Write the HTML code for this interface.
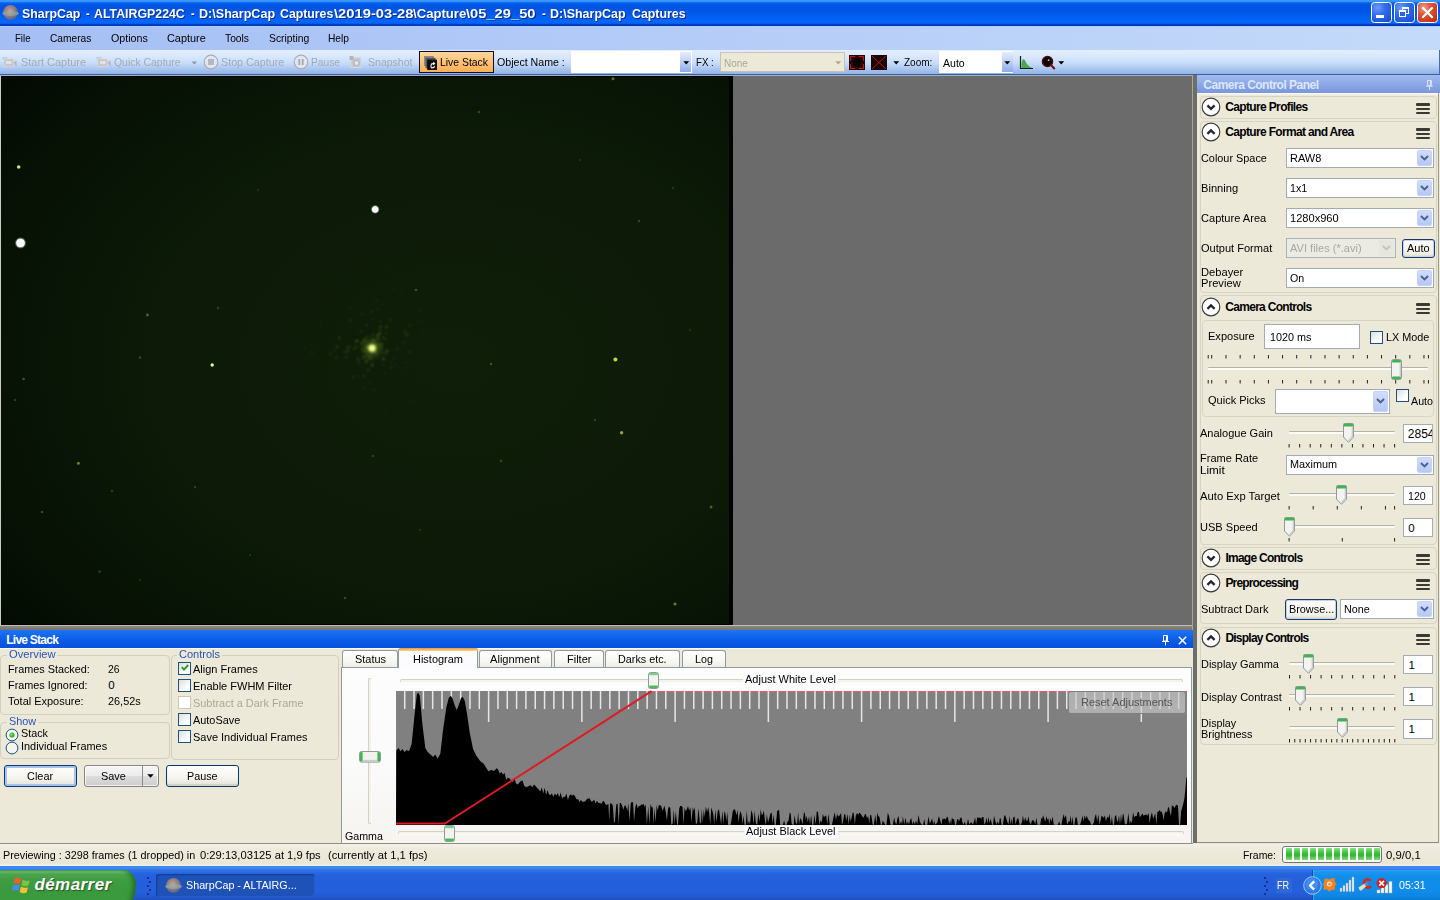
<!DOCTYPE html>
<html><head><meta charset="utf-8"><title>SharpCap</title>
<style>
html,body{margin:0;padding:0;width:1440px;height:900px;overflow:hidden;background:#ece9d8;font-family:"Liberation Sans",sans-serif;font-size:11px;color:#000;}
*{box-sizing:border-box;}
.abs{position:absolute;}
div,span{white-space:pre;}
svg{overflow:visible;}
#title{position:absolute;left:0;top:0;width:1440px;height:26px;background:linear-gradient(#3b97ff 0%,#3791fd 6%,#0a6cf0 10%,#0259e7 16%,#0054e2 30%,#0357e9 50%,#0063f5 72%,#0468fc 84%,#0a5ef4 90%,#0039ba 95%,#0035b4 100%);}
#menu{position:absolute;left:0;top:26px;width:1440px;height:25px;background:linear-gradient(90deg,#a5bff5,#c4dafa);border-top:1px solid #a9d0fb;}
#tool{position:absolute;left:0;top:50px;width:1440px;height:25px;border-right:1px solid #4a6aa8;background:linear-gradient(#e3efff 0%,#d9e8fd 25%,#cbe1fa 45%,#c3d9f8 56%,#a9c6f0 76%,#93b2e5 96%,#93b2e5 96%,#3b619c 96%,#3b619c 100%);}
#main{position:absolute;left:0;top:75px;width:1193px;height:552px;background:#6b6b6b;border-top:1px solid #9fb0cb;}
</style></head>
<body>
<div id="title"></div>
<div class="abs" style="left:3px;top:5px;width:15px;height:15px;border-radius:50%;background:radial-gradient(circle at 45% 40%,#c9a58f 0%,#8b7a86 45%,#4a5a8c 80%,#2a3f7a 100%);"></div>
<div class="abs" style="left:2px;top:11px;width:17px;height:5px;border-radius:50%;background:rgba(150,180,170,.55);"></div>
<span class="abs" style="left:21.70px;top:6.57px;font-size:13.5px;line-height:1;color:#fff;font-weight:bold;transform:scaleX(0.9143);transform-origin:0 0;text-shadow:1px 1px 0 #0a2c8a;">SharpCap</span>
<span class="abs" style="left:85.80px;top:6.57px;font-size:13.5px;line-height:1;color:#fff;font-weight:bold;transform:scaleX(0.8000);transform-origin:0 0;text-shadow:1px 1px 0 #0a2c8a;">-</span>
<span class="abs" style="left:94.20px;top:6.57px;font-size:13.5px;line-height:1;color:#fff;font-weight:bold;transform:scaleX(0.9146);transform-origin:0 0;text-shadow:1px 1px 0 #0a2c8a;">ALTAIRGP224C</span>
<span class="abs" style="left:191.40px;top:6.57px;font-size:13.5px;line-height:1;color:#fff;font-weight:bold;transform:scaleX(0.8000);transform-origin:0 0;text-shadow:1px 1px 0 #0a2c8a;">-</span>
<span class="abs" style="left:198.70px;top:6.57px;font-size:13.5px;line-height:1;color:#fff;font-weight:bold;transform:scaleX(0.9307);transform-origin:0 0;text-shadow:1px 1px 0 #0a2c8a;">D:\SharpCap</span>
<span class="abs" style="left:280.20px;top:6.57px;font-size:13.5px;line-height:1;color:#fff;font-weight:bold;transform:scaleX(0.9109);transform-origin:0 0;text-shadow:1px 1px 0 #0a2c8a;">Captures</span>
<span class="abs" style="left:333.50px;top:6.57px;font-size:13.5px;line-height:1;color:#fff;font-weight:bold;transform:scaleX(1.0918);transform-origin:0 0;text-shadow:1px 1px 0 #0a2c8a;">\2019-03-28</span>
<span class="abs" style="left:413.00px;top:6.57px;font-size:13.5px;line-height:1;color:#fff;font-weight:bold;transform:scaleX(0.9732);transform-origin:0 0;text-shadow:1px 1px 0 #0a2c8a;">\Capture</span>
<span class="abs" style="left:466.30px;top:6.57px;font-size:13.5px;line-height:1;color:#fff;font-weight:bold;transform:scaleX(1.0889);transform-origin:0 0;text-shadow:1px 1px 0 #0a2c8a;">\05_29_50</span>
<span class="abs" style="left:542.00px;top:6.57px;font-size:13.5px;line-height:1;color:#fff;font-weight:bold;transform:scaleX(0.8444);transform-origin:0 0;text-shadow:1px 1px 0 #0a2c8a;">-</span>
<span class="abs" style="left:550.40px;top:6.57px;font-size:13.5px;line-height:1;color:#fff;font-weight:bold;transform:scaleX(0.9246);transform-origin:0 0;text-shadow:1px 1px 0 #0a2c8a;">D:\SharpCap</span>
<span class="abs" style="left:631.70px;top:6.57px;font-size:13.5px;line-height:1;color:#fff;font-weight:bold;transform:scaleX(0.9160);transform-origin:0 0;text-shadow:1px 1px 0 #0a2c8a;">Captures</span>
<div class="abs" style="left:1371px;top:2px;width:21px;height:21px;border:1px solid #fff;border-radius:3.5px;background:radial-gradient(circle at 30% 25%,#6f9cf7 0%,#2f6ceb 40%,#1f55d8 80%,#1846bf 100%);"></div>
<div class="abs" style="left:1394px;top:2px;width:21px;height:21px;border:1px solid #fff;border-radius:3.5px;background:radial-gradient(circle at 30% 25%,#6f9cf7 0%,#2f6ceb 40%,#1f55d8 80%,#1846bf 100%);"></div>
<div class="abs" style="left:1417px;top:2px;width:21px;height:21px;border:1px solid #fff;border-radius:3.5px;background:radial-gradient(circle at 30% 25%,#f0a088 0%,#e0553a 35%,#c83a1c 75%,#b02c10 100%);"></div>
<div class="abs" style="left:1376px;top:15px;width:7.5px;height:3px;background:#fff;"></div>
<div class="abs" style="left:1401.5px;top:7px;width:7.5px;height:7px;border:1px solid #fff;border-top-width:2px;"></div>
<div class="abs" style="left:1399px;top:10px;width:7px;height:7px;border:1px solid #fff;border-top-width:2px;background:#2a62e0;"></div>
<svg class="abs" style="left:1421px;top:6px" width="13" height="13" viewBox="0 0 13 13"><path d="M2 2 L11 11 M11 2 L2 11" stroke="#fff" stroke-width="2.2" stroke-linecap="round"/></svg>
<div id="menu"></div>
<span class="abs" style="left:14.50px;top:33.09px;font-size:11px;line-height:1;color:#000;transform:scaleX(0.8740);transform-origin:0 0;">File</span>
<span class="abs" style="left:49.70px;top:33.09px;font-size:11px;line-height:1;color:#000;transform:scaleX(0.9255);transform-origin:0 0;">Cameras</span>
<span class="abs" style="left:110.70px;top:33.09px;font-size:11px;line-height:1;color:#000;transform:scaleX(0.9704);transform-origin:0 0;">Options</span>
<span class="abs" style="left:166.70px;top:33.09px;font-size:11px;line-height:1;color:#000;transform:scaleX(0.9913);transform-origin:0 0;">Capture</span>
<span class="abs" style="left:225.00px;top:33.09px;font-size:11px;line-height:1;color:#000;transform:scaleX(0.9343);transform-origin:0 0;">Tools</span>
<span class="abs" style="left:268.70px;top:33.09px;font-size:11px;line-height:1;color:#000;transform:scaleX(0.9417);transform-origin:0 0;">Scripting</span>
<span class="abs" style="left:328.00px;top:33.09px;font-size:11px;line-height:1;color:#000;transform:scaleX(0.9282);transform-origin:0 0;">Help</span>
<div id="tool"></div>
<svg class="abs" style="left:2px;top:56px" width="16" height="12" viewBox="0 0 16 12"><rect x="0.5" y="1" width="5" height="3" fill="#cccdd1"/><rect x="2" y="3" width="9.5" height="7.4" fill="#c4c6ca" stroke="#dcdde1" stroke-width="0.6"/><path d="M11.5 6.7 L14.6 4 V10.4 Z" fill="#b4b7bd"/><rect x="4" y="5" width="5.5" height="3.2" fill="#e2e3e6"/></svg>
<svg class="abs" style="left:95.5px;top:56px" width="16" height="12" viewBox="0 0 16 12"><rect x="0.5" y="1" width="5" height="3" fill="#cccdd1"/><rect x="2" y="3" width="9.5" height="7.4" fill="#c4c6ca" stroke="#dcdde1" stroke-width="0.6"/><path d="M11.5 6.7 L14.6 4 V10.4 Z" fill="#b4b7bd"/><rect x="4" y="5" width="5.5" height="3.2" fill="#e2e3e6"/></svg>
<span class="abs" style="left:20.80px;top:57.29px;font-size:11px;line-height:1;color:#a4a9b4;transform:scaleX(0.9936);transform-origin:0 0;">Start Capture</span>
<span class="abs" style="left:114.20px;top:57.29px;font-size:11px;line-height:1;color:#a4a9b4;transform:scaleX(0.9472);transform-origin:0 0;">Quick Capture</span>
<svg class="abs" style="left:191px;top:61px" width="7" height="4"><path d="M0.5 0.5 H6 L3.25 3.4 Z" fill="#8d97ad"/></svg>
<svg class="abs" style="left:202.5px;top:53.8px" width="16" height="16" viewBox="0 0 16 16"><circle cx="8" cy="8" r="6.8" fill="#e2e6ee" stroke="#a9adb8" stroke-width="1.2"/><rect x="5" y="5" width="6" height="6" fill="#b4b7c0"/></svg>
<span class="abs" style="left:220.80px;top:57.29px;font-size:11px;line-height:1;color:#a4a9b4;transform:scaleX(0.9749);transform-origin:0 0;">Stop Capture</span>
<svg class="abs" style="left:292.7px;top:53.8px" width="16" height="16" viewBox="0 0 16 16"><circle cx="8" cy="8" r="6.8" fill="#e2e6ee" stroke="#a9adb8" stroke-width="1.2"/><rect x="5.4" y="5" width="1.8" height="6" fill="#a4a8b2"/><rect x="8.8" y="5" width="1.8" height="6" fill="#a4a8b2"/></svg>
<span class="abs" style="left:311.00px;top:57.29px;font-size:11px;line-height:1;color:#a4a9b4;transform:scaleX(0.9294);transform-origin:0 0;">Pause</span>
<svg class="abs" style="left:349px;top:55px" width="14" height="14" viewBox="0 0 14 14"><rect x="2" y="2.5" width="10" height="10" fill="#c6c8cd" stroke="#dcdde0" stroke-width=".8"/><rect x="0.5" y="1" width="4" height="4" fill="#b2b5bb"/><circle cx="7.5" cy="8" r="2.5" fill="#e6e7ea" stroke="#a2a6ae" stroke-width=".8"/></svg>
<span class="abs" style="left:367.50px;top:57.29px;font-size:11px;line-height:1;color:#a4a9b4;transform:scaleX(0.9573);transform-origin:0 0;">Snapshot</span>
<div class="abs" style="left:419px;top:51px;width:75px;height:22px;border:1px solid #0b0b3c;background:linear-gradient(#ffd69e 0%,#ffc57c 45%,#ffae54 100%);"></div>
<svg class="abs" style="left:424px;top:56px" width="13" height="14" viewBox="0 0 13 14"><rect x="0" y="0" width="10" height="10" fill="#8a8a86"/><rect x="1.5" y="1.8" width="10" height="10.4" fill="#55555a"/><rect x="3.2" y="3.6" width="9.8" height="10.4" fill="#0c0c10"/><path d="M7 11.6 V9.4 Q7 7.6 9 7.6 H10.2 M9.2 6.4 L10.6 7.6 L9.2 8.8 M7 11.6 Q9.6 12.4 10.8 10.4" stroke="#f4f4f4" stroke-width="1.1" fill="none"/></svg>
<span class="abs" style="left:439.50px;top:57.29px;font-size:11px;line-height:1;color:#000;transform:scaleX(0.9458);transform-origin:0 0;">Live Stack</span>
<span class="abs" style="left:496.70px;top:57.29px;font-size:11px;line-height:1;color:#000;transform:scaleX(0.9643);transform-origin:0 0;">Object Name :</span>
<div class="abs" style="left:571px;top:51px;width:121px;height:22px;background:#fff;"></div>
<div class="abs" style="left:680px;top:52px;width:11px;height:20px;background:linear-gradient(#e4edfc,#bcd0f5 50%,#8dabe6);"></div>
<svg class="abs" style="left:682.5px;top:61px" width="7" height="4"><path d="M0.3 0.3 H6.2 L3.25 3.6 Z" fill="#000"/></svg>
<span class="abs" style="left:696.00px;top:57.29px;font-size:11px;line-height:1;color:#000;transform:scaleX(0.8824);transform-origin:0 0;">FX :</span>
<div class="abs" style="left:720px;top:52px;width:125px;height:20px;background:#ece9d8;border:1px solid #c5c2b4;"></div>
<span class="abs" style="left:724.00px;top:57.69px;font-size:11px;line-height:1;color:#a7a699;transform:scaleX(0.9012);transform-origin:0 0;">None</span>
<svg class="abs" style="left:835px;top:61px" width="7" height="4"><path d="M0.3 0.3 H6.2 L3.25 3.6 Z" fill="#a8a79c"/></svg>
<svg class="abs" style="left:849px;top:54.6px" width="16" height="15" viewBox="0 0 16 15"><rect x="0" y="0" width="16" height="15" fill="#240707"/><rect x="1.6" y="1.6" width="12.8" height="11.8" fill="none" stroke="#d61a1a" stroke-width="1"/><circle cx="8" cy="7.5" r="4.2" fill="#000"/><path d="M6.2 1.6 H9.8 M6.2 13.4 H9.8 M1.6 5.8 V9.2 M14.4 5.8 V9.2" stroke="#240707" stroke-width="1.2"/></svg>
<svg class="abs" style="left:871px;top:54.6px" width="16" height="15" viewBox="0 0 16 15"><rect x="0" y="0" width="16" height="15" fill="#1c0505"/><path d="M1 1 L15 14 M15 1 L1 14" stroke="#c41414" stroke-width="0.9"/></svg>
<svg class="abs" style="left:892.5px;top:61px" width="7" height="4"><path d="M0.3 0.3 H6.2 L3.25 3.6 Z" fill="#000"/></svg>
<span class="abs" style="left:904.00px;top:57.29px;font-size:11px;line-height:1;color:#000;transform:scaleX(0.9106);transform-origin:0 0;">Zoom:</span>
<div class="abs" style="left:939px;top:51px;width:74px;height:22px;background:#fff;"></div>
<div class="abs" style="left:1001.5px;top:52px;width:11px;height:20px;background:linear-gradient(#e4edfc,#bcd0f5 50%,#8dabe6);"></div>
<svg class="abs" style="left:1004px;top:61px" width="7" height="4"><path d="M0.3 0.3 H6.2 L3.25 3.6 Z" fill="#000"/></svg>
<span class="abs" style="left:943.30px;top:57.69px;font-size:11px;line-height:1;color:#000;transform:scaleX(0.9585);transform-origin:0 0;">Auto</span>
<svg class="abs" style="left:1018.5px;top:54.5px" width="15" height="15" viewBox="0 0 15 15"><path d="M1.5 1 V13.5 H14" stroke="#1a1a1a" stroke-width="1.2" fill="none"/><path d="M2.5 13 V8 Q4.2 1.5 6 5.5 Q7.5 9 9.5 10.8 Q11 12.4 13 13 Z" fill="#4aa84a"/></svg>
<svg class="abs" style="left:1040.5px;top:54.5px" width="15" height="15" viewBox="0 0 15 15"><circle cx="6.5" cy="6.5" r="5" fill="#0a0606" stroke="#4a0c0c" stroke-width="1.6"/><circle cx="7.6" cy="5.2" r="0.9" fill="#cfc8c8"/><path d="M10.2 10.2 L13.2 13.4" stroke="#7a1010" stroke-width="2.2" stroke-linecap="round"/></svg>
<svg class="abs" style="left:1057.5px;top:61px" width="7" height="4"><path d="M0.3 0.3 H6.2 L3.25 3.6 Z" fill="#000"/></svg>
<div id="main"></div>
<svg class="abs" style="left:1px;top:76px" width="732" height="549" viewBox="1 76 732 549"><defs><radialGradient id="bgv" cx="62%" cy="52%" r="80%"><stop offset="0" stop-color="#0f1e09"/><stop offset=".5" stop-color="#0c1a07"/><stop offset=".8" stop-color="#071205"/><stop offset="1" stop-color="#030a02"/></radialGradient><radialGradient id="glow" cx="50%" cy="50%" r="50%"><stop offset="0" stop-color="#e8ff70" stop-opacity="1"/><stop offset=".18" stop-color="#c8e84a" stop-opacity=".9"/><stop offset=".4" stop-color="#6a8a22" stop-opacity=".5"/><stop offset="1" stop-color="#2a4010" stop-opacity="0"/></radialGradient><radialGradient id="st" cx="50%" cy="50%" r="50%"><stop offset="0" stop-color="#ffffff"/><stop offset=".6" stop-color="#f4ffe8"/><stop offset="1" stop-color="#7a9a50" stop-opacity="0"/></radialGradient><filter id="bl" x="-20%" y="-20%" width="140%" height="140%"><feGaussianBlur stdDeviation="0.8"/></filter></defs><rect x="1" y="76" width="732" height="549" fill="url(#bgv)"/><rect x="729" y="76" width="4" height="549" fill="#010301"/><rect x="1" y="76" width="732" height="1" fill="#010201"/><rect x="1" y="624" width="732" height="1" fill="#010201"/><g filter="url(#bl)"><circle cx="365.0" cy="338.8" r="1.2" fill="#7a9a2a" opacity="0.20"/><circle cx="358.6" cy="362.7" r="1.2" fill="#7a9a2a" opacity="0.17"/><circle cx="405.8" cy="363.2" r="1.1" fill="#7a9a2a" opacity="0.12"/><circle cx="377.7" cy="338.1" r="1.0" fill="#7a9a2a" opacity="0.21"/><circle cx="320.7" cy="322.5" r="1.5" fill="#7a9a2a" opacity="0.07"/><circle cx="429.4" cy="364.6" r="1.0" fill="#7a9a2a" opacity="0.09"/><circle cx="367.1" cy="360.5" r="0.9" fill="#7a9a2a" opacity="0.36"/><circle cx="357.6" cy="340.5" r="1.1" fill="#7a9a2a" opacity="0.31"/><circle cx="386.1" cy="353.4" r="1.3" fill="#7a9a2a" opacity="0.22"/><circle cx="365.4" cy="351.3" r="1.2" fill="#7a9a2a" opacity="0.28"/><circle cx="380.3" cy="320.9" r="1.0" fill="#7a9a2a" opacity="0.24"/><circle cx="361.5" cy="343.1" r="1.4" fill="#7a9a2a" opacity="0.31"/><circle cx="379.4" cy="347.3" r="1.1" fill="#7a9a2a" opacity="0.23"/><circle cx="373.5" cy="319.6" r="1.1" fill="#7a9a2a" opacity="0.15"/><circle cx="376.7" cy="300.8" r="1.4" fill="#7a9a2a" opacity="0.11"/><circle cx="366.0" cy="361.8" r="1.2" fill="#7a9a2a" opacity="0.32"/><circle cx="390.8" cy="320.2" r="1.1" fill="#7a9a2a" opacity="0.24"/><circle cx="361.3" cy="331.1" r="1.3" fill="#7a9a2a" opacity="0.17"/><circle cx="400.4" cy="292.8" r="1.1" fill="#7a9a2a" opacity="0.06"/><circle cx="330.7" cy="278.1" r="1.1" fill="#7a9a2a" opacity="0.05"/><circle cx="383.2" cy="352.3" r="0.9" fill="#7a9a2a" opacity="0.36"/><circle cx="372.4" cy="365.2" r="1.4" fill="#7a9a2a" opacity="0.25"/><circle cx="339.2" cy="338.2" r="1.4" fill="#7a9a2a" opacity="0.24"/><circle cx="385.9" cy="333.2" r="1.1" fill="#7a9a2a" opacity="0.21"/><circle cx="416.4" cy="336.7" r="0.9" fill="#7a9a2a" opacity="0.09"/><circle cx="378.4" cy="400.6" r="1.1" fill="#7a9a2a" opacity="0.06"/><circle cx="397.3" cy="348.8" r="1.1" fill="#7a9a2a" opacity="0.22"/><circle cx="356.3" cy="341.6" r="1.3" fill="#7a9a2a" opacity="0.37"/><circle cx="350.6" cy="307.3" r="1.4" fill="#7a9a2a" opacity="0.07"/><circle cx="373.7" cy="340.4" r="1.4" fill="#7a9a2a" opacity="0.41"/><circle cx="395.3" cy="365.0" r="0.8" fill="#7a9a2a" opacity="0.23"/><circle cx="394.2" cy="357.6" r="0.9" fill="#7a9a2a" opacity="0.18"/><circle cx="381.7" cy="348.2" r="0.9" fill="#7a9a2a" opacity="0.23"/><circle cx="363.7" cy="357.4" r="1.4" fill="#7a9a2a" opacity="0.19"/><circle cx="371.8" cy="365.0" r="1.1" fill="#7a9a2a" opacity="0.24"/><circle cx="383.5" cy="358.7" r="1.5" fill="#7a9a2a" opacity="0.35"/><circle cx="406.4" cy="367.7" r="1.0" fill="#7a9a2a" opacity="0.11"/><circle cx="371.0" cy="359.4" r="0.9" fill="#7a9a2a" opacity="0.38"/><circle cx="291.6" cy="334.5" r="1.2" fill="#7a9a2a" opacity="0.05"/><circle cx="387.2" cy="350.7" r="1.5" fill="#7a9a2a" opacity="0.29"/><circle cx="369.6" cy="382.6" r="0.9" fill="#7a9a2a" opacity="0.16"/><circle cx="377.8" cy="309.2" r="1.3" fill="#7a9a2a" opacity="0.15"/><circle cx="377.7" cy="335.1" r="1.4" fill="#7a9a2a" opacity="0.39"/><circle cx="380.4" cy="326.8" r="1.3" fill="#7a9a2a" opacity="0.30"/><circle cx="366.2" cy="355.4" r="0.8" fill="#7a9a2a" opacity="0.20"/><circle cx="364.3" cy="387.6" r="1.3" fill="#7a9a2a" opacity="0.12"/><circle cx="406.7" cy="334.4" r="1.5" fill="#7a9a2a" opacity="0.23"/><circle cx="363.3" cy="357.8" r="1.0" fill="#7a9a2a" opacity="0.23"/><circle cx="364.2" cy="340.8" r="1.4" fill="#7a9a2a" opacity="0.40"/><circle cx="347.9" cy="351.2" r="1.4" fill="#7a9a2a" opacity="0.26"/><circle cx="409.7" cy="325.5" r="1.3" fill="#7a9a2a" opacity="0.16"/><circle cx="344.5" cy="351.8" r="1.4" fill="#7a9a2a" opacity="0.16"/><circle cx="404.1" cy="342.7" r="1.1" fill="#7a9a2a" opacity="0.18"/><circle cx="423.0" cy="331.4" r="0.9" fill="#7a9a2a" opacity="0.10"/><circle cx="386.0" cy="339.2" r="0.9" fill="#7a9a2a" opacity="0.34"/><circle cx="380.0" cy="333.8" r="1.3" fill="#7a9a2a" opacity="0.37"/><circle cx="391.0" cy="367.6" r="1.5" fill="#7a9a2a" opacity="0.14"/><circle cx="350.5" cy="320.1" r="1.5" fill="#7a9a2a" opacity="0.18"/><circle cx="401.3" cy="294.8" r="1.0" fill="#7a9a2a" opacity="0.06"/><circle cx="364.0" cy="375.9" r="1.2" fill="#7a9a2a" opacity="0.17"/><circle cx="376.2" cy="352.4" r="1.0" fill="#7a9a2a" opacity="0.43"/><circle cx="336.1" cy="357.4" r="1.4" fill="#7a9a2a" opacity="0.18"/><circle cx="305.3" cy="347.5" r="1.2" fill="#7a9a2a" opacity="0.07"/><circle cx="410.0" cy="352.5" r="0.9" fill="#7a9a2a" opacity="0.16"/><circle cx="400.8" cy="399.7" r="1.3" fill="#7a9a2a" opacity="0.07"/><circle cx="367.0" cy="346.4" r="1.2" fill="#7a9a2a" opacity="0.29"/><circle cx="416.6" cy="381.5" r="1.0" fill="#7a9a2a" opacity="0.08"/><circle cx="368.2" cy="369.9" r="1.2" fill="#7a9a2a" opacity="0.29"/><circle cx="418.2" cy="321.4" r="1.2" fill="#7a9a2a" opacity="0.08"/><circle cx="347.7" cy="347.4" r="1.3" fill="#7a9a2a" opacity="0.24"/><circle cx="330.7" cy="353.7" r="1.3" fill="#7a9a2a" opacity="0.20"/><circle cx="383.3" cy="337.8" r="1.0" fill="#7a9a2a" opacity="0.38"/><circle cx="412.5" cy="287.8" r="0.9" fill="#7a9a2a" opacity="0.05"/><circle cx="342.2" cy="359.0" r="1.0" fill="#7a9a2a" opacity="0.13"/><circle cx="382.0" cy="304.9" r="0.9" fill="#7a9a2a" opacity="0.16"/><circle cx="366.8" cy="324.9" r="0.9" fill="#7a9a2a" opacity="0.26"/><circle cx="384.7" cy="409.8" r="1.1" fill="#7a9a2a" opacity="0.10"/><circle cx="312.0" cy="352.8" r="1.4" fill="#7a9a2a" opacity="0.10"/><circle cx="350.2" cy="346.2" r="0.9" fill="#7a9a2a" opacity="0.22"/><circle cx="358.4" cy="376.6" r="0.8" fill="#7a9a2a" opacity="0.22"/><circle cx="408.4" cy="352.1" r="1.2" fill="#7a9a2a" opacity="0.15"/><circle cx="356.7" cy="347.1" r="1.5" fill="#7a9a2a" opacity="0.19"/><circle cx="391.4" cy="362.4" r="0.8" fill="#7a9a2a" opacity="0.19"/><circle cx="387.9" cy="266.9" r="0.9" fill="#7a9a2a" opacity="0.06"/><circle cx="399.9" cy="291.1" r="0.9" fill="#7a9a2a" opacity="0.06"/><circle cx="404.5" cy="331.1" r="1.3" fill="#7a9a2a" opacity="0.18"/><circle cx="367.1" cy="336.5" r="0.9" fill="#7a9a2a" opacity="0.28"/><circle cx="381.2" cy="344.7" r="1.4" fill="#7a9a2a" opacity="0.34"/><circle cx="425.5" cy="370.8" r="1.1" fill="#7a9a2a" opacity="0.09"/><circle cx="353.2" cy="376.9" r="1.4" fill="#7a9a2a" opacity="0.19"/><circle cx="366.3" cy="347.3" r="0.9" fill="#7a9a2a" opacity="0.27"/><circle cx="383.0" cy="364.9" r="0.9" fill="#7a9a2a" opacity="0.17"/><circle cx="373.0" cy="334.6" r="1.2" fill="#7a9a2a" opacity="0.24"/><circle cx="384.9" cy="373.2" r="0.8" fill="#7a9a2a" opacity="0.19"/><circle cx="371.7" cy="344.4" r="0.9" fill="#7a9a2a" opacity="0.35"/><circle cx="362.6" cy="349.6" r="0.9" fill="#7a9a2a" opacity="0.42"/><circle cx="353.8" cy="348.7" r="1.1" fill="#7a9a2a" opacity="0.34"/><circle cx="337.2" cy="346.8" r="1.5" fill="#7a9a2a" opacity="0.21"/><circle cx="362.1" cy="314.1" r="1.1" fill="#7a9a2a" opacity="0.19"/><circle cx="340.7" cy="390.5" r="0.9" fill="#7a9a2a" opacity="0.05"/><circle cx="370.3" cy="397.1" r="0.9" fill="#7a9a2a" opacity="0.07"/><circle cx="386.5" cy="327.0" r="1.3" fill="#7a9a2a" opacity="0.29"/><circle cx="369.8" cy="356.2" r="0.9" fill="#7a9a2a" opacity="0.31"/><circle cx="346.3" cy="356.9" r="1.5" fill="#7a9a2a" opacity="0.18"/><circle cx="373.6" cy="389.7" r="1.0" fill="#7a9a2a" opacity="0.18"/><circle cx="365.3" cy="356.3" r="1.1" fill="#7a9a2a" opacity="0.19"/><circle cx="384.6" cy="385.6" r="0.8" fill="#7a9a2a" opacity="0.15"/><circle cx="371.2" cy="357.7" r="1.1" fill="#7a9a2a" opacity="0.21"/><circle cx="368.6" cy="357.7" r="1.2" fill="#7a9a2a" opacity="0.25"/><circle cx="366.4" cy="347.2" r="1.3" fill="#7a9a2a" opacity="0.40"/><circle cx="358.3" cy="359.1" r="1.5" fill="#7a9a2a" opacity="0.23"/><circle cx="412.4" cy="400.6" r="1.3" fill="#7a9a2a" opacity="0.08"/><circle cx="420.7" cy="310.9" r="1.3" fill="#7a9a2a" opacity="0.08"/><circle cx="379.9" cy="330.2" r="1.2" fill="#7a9a2a" opacity="0.19"/><circle cx="393.9" cy="290.3" r="1.2" fill="#7a9a2a" opacity="0.09"/><circle cx="376.5" cy="344.8" r="1.3" fill="#7a9a2a" opacity="0.38"/><circle cx="375.5" cy="351.7" r="0.9" fill="#7a9a2a" opacity="0.30"/><circle cx="378.3" cy="338.4" r="1.2" fill="#7a9a2a" opacity="0.31"/><circle cx="334.3" cy="350.6" r="1.4" fill="#7a9a2a" opacity="0.10"/><circle cx="371.7" cy="311.7" r="1.2" fill="#7a9a2a" opacity="0.16"/><circle cx="372.1" cy="348.2" r="14" fill="url(#glow)" opacity=".8"/><circle cx="372.1" cy="348.2" r="3.4" fill="#eeff8a"/></g><circle cx="20.5" cy="243" r="6" fill="url(#st)"/><circle cx="20.5" cy="243" r="4" fill="#fff"/><circle cx="375.2" cy="209.4" r="4.6" fill="url(#st)"/><circle cx="375.2" cy="209.4" r="3" fill="#fff"/><circle cx="18.7" cy="167" r="1.8" fill="#c8e86a" opacity="1"/><circle cx="212.2" cy="365" r="1.7" fill="#d8ffa0" opacity="1"/><circle cx="615.4" cy="359.4" r="2" fill="#c8d838" opacity="1"/><circle cx="621.6" cy="432.8" r="1.7" fill="#b0b030" opacity="0.9"/><circle cx="78.4" cy="463.3" r="1.5" fill="#8a9a30" opacity="0.8"/><circle cx="675" cy="604" r="1.6" fill="#8a9030" opacity="0.8"/><circle cx="613" cy="78.7" r="1.5" fill="#7a8a30" opacity="0.8"/><circle cx="711" cy="507" r="1.5" fill="#6a7a30" opacity="0.7"/><circle cx="147.5" cy="315" r="1.4" fill="#7a7a28" opacity="0.7"/><circle cx="23.6" cy="379" r="1.3" fill="#5a7a28" opacity="0.7"/><circle cx="140" cy="357.5" r="1.3" fill="#5a6a28" opacity="0.6"/><circle cx="479" cy="112" r="1.3" fill="#4a6a28" opacity="0.6"/><circle cx="639" cy="221" r="1.3" fill="#4a6a28" opacity="0.6"/><circle cx="501" cy="461" r="1.3" fill="#4a6a28" opacity="0.6"/><circle cx="491" cy="364" r="1.3" fill="#5a7a28" opacity="0.6"/><circle cx="373" cy="456" r="1.3" fill="#4a6a28" opacity="0.5"/><circle cx="345" cy="598" r="1.3" fill="#5a6a28" opacity="0.6"/><circle cx="42" cy="512" r="1.3" fill="#5a6a28" opacity="0.6"/><circle cx="99.6" cy="571.6" r="1.3" fill="#4a6a28" opacity="0.5"/><circle cx="195" cy="487" r="1.2" fill="#4a6a28" opacity="0.5"/><circle cx="112" cy="491" r="1.2" fill="#4a6a28" opacity="0.5"/><circle cx="218" cy="308" r="1.2" fill="#4a6a28" opacity="0.5"/><circle cx="416" cy="290" r="1.3" fill="#5a7a28" opacity="0.6"/><circle cx="15" cy="400" r="1.2" fill="#4a6a28" opacity="0.5"/><circle cx="673" cy="188" r="1.2" fill="#3a5a20" opacity="0.5"/><circle cx="258" cy="190" r="1.1" fill="#3a5a20" opacity="0.5"/><circle cx="580" cy="160" r="1.1" fill="#3a5a20" opacity="0.5"/><circle cx="690" cy="330" r="1.1" fill="#3a5a20" opacity="0.5"/><circle cx="595" cy="420" r="1.2" fill="#4a6a28" opacity="0.5"/><circle cx="420" cy="530" r="1.1" fill="#3a5a20" opacity="0.5"/><circle cx="250" cy="555" r="1.1" fill="#3a5a20" opacity="0.5"/><circle cx="140" cy="580" r="1.1" fill="#3a5a20" opacity="0.5"/></svg>
<div class="abs" style="left:0;top:76px;width:1px;height:549px;background:#cfcbc0;"></div>
<div class="abs" style="left:0;top:625px;width:1193px;height:1px;background:#c2beb2;"></div>
<div class="abs" style="left:0;top:626px;width:1193px;height:4px;background:linear-gradient(#8a8883,#76746e);"></div>
<div class="abs" style="left:1192px;top:75px;width:1px;height:768px;background:#a9a79a;"></div>
<div class="abs" style="left:1193px;top:75px;width:4.4px;height:768px;background:#6c6e69;"></div>
<div class="abs" style="left:1197px;top:75px;width:243px;height:768px;background:#ece9d8;"></div>
<div class="abs" style="left:1197px;top:75px;width:243px;height:18.4px;background:linear-gradient(#a1bbee 0%,#93afe9 35%,#86a3e4 65%,#7b97dc 100%);box-shadow:0 1.4px 0 #fbfaf5;"></div>
<span class="abs" style="left:1203.30px;top:79.44px;font-size:12px;line-height:1;color:#dde7fa;font-weight:bold;letter-spacing:-0.504px;">Camera Control Panel</span>
<svg class="abs" style="left:1425px;top:80px" width="9" height="10.4" viewBox="0 0 9 11"><path d="M2.5 0.5 H6.5 V6 H2.5 Z M1 6.5 H8 M4.5 6.5 V10.5" stroke="#dfe8fb" stroke-width="1" fill="none"/><path d="M5.6 1 V6" stroke="#dfe8fb" stroke-width="1"/></svg>
<div class="abs" style="left:1199.5px;top:95.5px;width:237px;height:23.5px;border:1px solid #d6d4c3;border-radius:4px;"></div>
<svg class="abs" style="left:1201.2px;top:97.2px" width="20" height="20" viewBox="-10 -10 20 20"><circle cx="0" cy="0" r="8.85" fill="#fff" stroke="#3a3a3a" stroke-width="1.1"/><path d="M-3.6 -1.6 L0 1.9 L3.6 -1.6" stroke="#26262a" stroke-width="2.3" fill="none" stroke-linecap="butt" stroke-linejoin="miter"/></svg>
<div class="abs" style="left:1416px;top:103.4px;width:13.5px;height:2.4px;background:#3a3a34;border-radius:1px;"></div>
<div class="abs" style="left:1416px;top:107.6px;width:13.5px;height:2.4px;background:#3a3a34;border-radius:1px;"></div>
<div class="abs" style="left:1416px;top:111.8px;width:13.5px;height:2.4px;background:#3a3a34;border-radius:1px;"></div>
<span class="abs" style="left:1225.30px;top:101.14px;font-size:12px;line-height:1;color:#000;font-weight:bold;letter-spacing:-0.650px;">Capture Profiles</span>
<div class="abs" style="left:1199.5px;top:120.5px;width:237px;height:172px;border:1px solid #d6d4c3;border-radius:4px;"></div>
<svg class="abs" style="left:1201.2px;top:122.20000000000002px" width="20" height="20" viewBox="-10 -10 20 20"><circle cx="0" cy="0" r="8.85" fill="#fff" stroke="#3a3a3a" stroke-width="1.1"/><path d="M-3.6 1.9 L0 -1.6 L3.6 1.9" stroke="#26262a" stroke-width="2.3" fill="none" stroke-linecap="butt" stroke-linejoin="miter"/></svg>
<div class="abs" style="left:1416px;top:128.4px;width:13.5px;height:2.4px;background:#3a3a34;border-radius:1px;"></div>
<div class="abs" style="left:1416px;top:132.6px;width:13.5px;height:2.4px;background:#3a3a34;border-radius:1px;"></div>
<div class="abs" style="left:1416px;top:136.8px;width:13.5px;height:2.4px;background:#3a3a34;border-radius:1px;"></div>
<span class="abs" style="left:1225.30px;top:125.94px;font-size:12px;line-height:1;color:#000;font-weight:bold;letter-spacing:-0.665px;">Capture Format and Area</span>
<span class="abs" style="left:1200.80px;top:152.57px;font-size:11.5px;line-height:1;color:#000;transform:scaleX(0.9457);transform-origin:0 0;">Colour Space</span>
<div class="abs" style="left:1286px;top:148px;width:148px;height:19.5px;background:#fff;border:1px solid #a3abb8;"></div>
<div class="abs" style="left:1417px;top:150px;width:15px;height:15.5px;background:linear-gradient(#cfdcfd,#b4c8f6);border:1px solid #c6d3f7;border-radius:2px;"></div>
<svg class="abs" style="left:1420px;top:154.75px" width="9" height="6" viewBox="0 0 9 6"><path d="M1 1 L4.5 4.5 L8 1" stroke="#4d6185" stroke-width="1.9" fill="none"/></svg>
<span class="abs" style="left:1290.30px;top:153.37px;font-size:11.5px;line-height:1;color:#000;transform:scaleX(0.9539);transform-origin:0 0;">RAW8</span>
<span class="abs" style="left:1200.80px;top:183.27px;font-size:11.5px;line-height:1;color:#000;transform:scaleX(0.9694);transform-origin:0 0;">Binning</span>
<div class="abs" style="left:1286px;top:178px;width:148px;height:19.5px;background:#fff;border:1px solid #a3abb8;"></div>
<div class="abs" style="left:1417px;top:180px;width:15px;height:15.5px;background:linear-gradient(#cfdcfd,#b4c8f6);border:1px solid #c6d3f7;border-radius:2px;"></div>
<svg class="abs" style="left:1420px;top:184.75px" width="9" height="6" viewBox="0 0 9 6"><path d="M1 1 L4.5 4.5 L8 1" stroke="#4d6185" stroke-width="1.9" fill="none"/></svg>
<span class="abs" style="left:1290.30px;top:183.37px;font-size:11.5px;line-height:1;color:#000;transform:scaleX(0.9274);transform-origin:0 0;">1x1</span>
<span class="abs" style="left:1200.80px;top:213.07px;font-size:11.5px;line-height:1;color:#000;transform:scaleX(0.9621);transform-origin:0 0;">Capture Area</span>
<div class="abs" style="left:1286px;top:208px;width:148px;height:19.5px;background:#fff;border:1px solid #a3abb8;"></div>
<div class="abs" style="left:1417px;top:210px;width:15px;height:15.5px;background:linear-gradient(#cfdcfd,#b4c8f6);border:1px solid #c6d3f7;border-radius:2px;"></div>
<svg class="abs" style="left:1420px;top:214.75px" width="9" height="6" viewBox="0 0 9 6"><path d="M1 1 L4.5 4.5 L8 1" stroke="#4d6185" stroke-width="1.9" fill="none"/></svg>
<span class="abs" style="left:1290.30px;top:213.37px;font-size:11.5px;line-height:1;color:#000;transform:scaleX(0.9638);transform-origin:0 0;">1280x960</span>
<span class="abs" style="left:1200.80px;top:243.07px;font-size:11.5px;line-height:1;color:#000;transform:scaleX(0.9603);transform-origin:0 0;">Output Format</span>
<div class="abs" style="left:1286px;top:238px;width:110px;height:19.5px;background:#ebebe4;border:1px solid #a9b4be;"></div>
<div class="abs" style="left:1379px;top:240px;width:15px;height:15.5px;background:#e6e6de;border-radius:2px;"></div>
<svg class="abs" style="left:1382px;top:244.75px" width="9" height="6" viewBox="0 0 9 6"><path d="M1 1 L4.5 4.5 L8 1" stroke="#c4c4bc" stroke-width="1.8" fill="none"/></svg>
<span class="abs" style="left:1290.30px;top:243.37px;font-size:11.5px;line-height:1;color:#a8a8a0;transform:scaleX(0.9616);transform-origin:0 0;">AVI files (*.avi)</span>
<div class="abs" style="left:1401.5px;top:238.5px;width:33px;height:19px;border:1px solid #1f3a5f;border-radius:3px;background:linear-gradient(#fdfdfb,#f0efe6 80%,#d9d7c8);box-shadow:inset 0 0 0 1px #c2d2f0;"></div>
<span class="abs" style="left:1407.30px;top:243.37px;font-size:11.5px;line-height:1;color:#000;transform:scaleX(0.9589);transform-origin:0 0;">Auto</span>
<span class="abs" style="left:1200.80px;top:266.87px;font-size:11.5px;line-height:1;color:#000;transform:scaleX(0.9708);transform-origin:0 0;">Debayer</span>
<span class="abs" style="left:1200.80px;top:278.37px;font-size:11.5px;line-height:1;color:#000;transform:scaleX(0.9705);transform-origin:0 0;">Preview</span>
<div class="abs" style="left:1286px;top:268px;width:148px;height:19.5px;background:#fff;border:1px solid #a3abb8;"></div>
<div class="abs" style="left:1417px;top:270px;width:15px;height:15.5px;background:linear-gradient(#cfdcfd,#b4c8f6);border:1px solid #c6d3f7;border-radius:2px;"></div>
<svg class="abs" style="left:1420px;top:274.75px" width="9" height="6" viewBox="0 0 9 6"><path d="M1 1 L4.5 4.5 L8 1" stroke="#4d6185" stroke-width="1.9" fill="none"/></svg>
<span class="abs" style="left:1290.30px;top:273.37px;font-size:11.5px;line-height:1;color:#000;transform:scaleX(0.9255);transform-origin:0 0;">On</span>
<div class="abs" style="left:1199.5px;top:295px;width:237px;height:250px;border:1px solid #d6d4c3;border-radius:4px;"></div>
<svg class="abs" style="left:1201.2px;top:296.9px" width="20" height="20" viewBox="-10 -10 20 20"><circle cx="0" cy="0" r="8.85" fill="#fff" stroke="#3a3a3a" stroke-width="1.1"/><path d="M-3.6 1.9 L0 -1.6 L3.6 1.9" stroke="#26262a" stroke-width="2.3" fill="none" stroke-linecap="butt" stroke-linejoin="miter"/></svg>
<div class="abs" style="left:1416px;top:303.4px;width:13.5px;height:2.4px;background:#3a3a34;border-radius:1px;"></div>
<div class="abs" style="left:1416px;top:307.6px;width:13.5px;height:2.4px;background:#3a3a34;border-radius:1px;"></div>
<div class="abs" style="left:1416px;top:311.8px;width:13.5px;height:2.4px;background:#3a3a34;border-radius:1px;"></div>
<span class="abs" style="left:1225.30px;top:301.04px;font-size:12px;line-height:1;color:#000;font-weight:bold;letter-spacing:-0.707px;">Camera Controls</span>
<div class="abs" style="left:1202px;top:319.5px;width:232px;height:97px;border:1px solid #d6d4c3;border-radius:4px;"></div>
<span class="abs" style="left:1207.50px;top:331.07px;font-size:11.5px;line-height:1;color:#000;transform:scaleX(0.9610);transform-origin:0 0;">Exposure</span>
<div class="abs" style="left:1263.6px;top:324.4px;width:96px;height:24.8px;background:#fff;border:1px solid #a3abb8;overflow:hidden;"></div>
<span class="abs" style="left:1270.00px;top:332.07px;font-size:11.5px;line-height:1;color:#000;transform:scaleX(0.9386);transform-origin:0 0;">1020 ms</span>
<div class="abs" style="left:1369.8px;top:331.2px;width:13px;height:13px;border:1px solid #1c5180;background:linear-gradient(135deg,#dcdcd7,#fff 70%);"></div>
<span class="abs" style="left:1385.70px;top:332.07px;font-size:11.5px;line-height:1;color:#000;transform:scaleX(0.9407);transform-origin:0 0;">LX Mode</span>
<svg class="abs" style="left:0;top:354.5px" width="1440" height="3.5"><rect x="1207.70" y="0" width="1" height="3.5" fill="#222"/><rect x="1211.20" y="0" width="1" height="3.5" fill="#222"/><rect x="1225.50" y="0" width="1" height="3.5" fill="#222"/><rect x="1239.64" y="0" width="1" height="3.5" fill="#222"/><rect x="1253.78" y="0" width="1" height="3.5" fill="#222"/><rect x="1267.92" y="0" width="1" height="3.5" fill="#222"/><rect x="1282.06" y="0" width="1" height="3.5" fill="#222"/><rect x="1296.20" y="0" width="1" height="3.5" fill="#222"/><rect x="1310.34" y="0" width="1" height="3.5" fill="#222"/><rect x="1324.48" y="0" width="1" height="3.5" fill="#222"/><rect x="1338.62" y="0" width="1" height="3.5" fill="#222"/><rect x="1352.76" y="0" width="1" height="3.5" fill="#222"/><rect x="1366.90" y="0" width="1" height="3.5" fill="#222"/><rect x="1381.04" y="0" width="1" height="3.5" fill="#222"/><rect x="1395.18" y="0" width="1" height="3.5" fill="#222"/><rect x="1409.32" y="0" width="1" height="3.5" fill="#222"/><rect x="1423.46" y="0" width="1" height="3.5" fill="#222"/><rect x="1427.90" y="0" width="1" height="3.5" fill="#222"/></svg>
<div class="abs" style="left:1208px;top:366.6px;width:220px;height:3.6px;border-top:1px solid #b4b2a6;border-radius:1px;background:#fbfbf6;"></div>
<svg class="abs" style="left:1391px;top:358.5px" width="11" height="21" viewBox="0 0 11 21"><rect x="0.5" y="0.5" width="10" height="20" rx="2" fill="#f3f3ef" stroke="#8e9a9e"/><rect x="1" y="1" width="9" height="2.6" rx="1" fill="#3fb44f"/><rect x="1" y="17.4" width="9" height="2.6" rx="1" fill="#3fb44f"/><path d="M9.3 4 V17" stroke="#c9cdc6" stroke-width="1.4"/></svg>
<svg class="abs" style="left:0;top:379.8px" width="1440" height="3.5"><rect x="1207.70" y="0" width="1" height="3.5" fill="#222"/><rect x="1211.20" y="0" width="1" height="3.5" fill="#222"/><rect x="1225.50" y="0" width="1" height="3.5" fill="#222"/><rect x="1239.64" y="0" width="1" height="3.5" fill="#222"/><rect x="1253.78" y="0" width="1" height="3.5" fill="#222"/><rect x="1267.92" y="0" width="1" height="3.5" fill="#222"/><rect x="1282.06" y="0" width="1" height="3.5" fill="#222"/><rect x="1296.20" y="0" width="1" height="3.5" fill="#222"/><rect x="1310.34" y="0" width="1" height="3.5" fill="#222"/><rect x="1324.48" y="0" width="1" height="3.5" fill="#222"/><rect x="1338.62" y="0" width="1" height="3.5" fill="#222"/><rect x="1352.76" y="0" width="1" height="3.5" fill="#222"/><rect x="1366.90" y="0" width="1" height="3.5" fill="#222"/><rect x="1381.04" y="0" width="1" height="3.5" fill="#222"/><rect x="1395.18" y="0" width="1" height="3.5" fill="#222"/><rect x="1409.32" y="0" width="1" height="3.5" fill="#222"/><rect x="1423.46" y="0" width="1" height="3.5" fill="#222"/><rect x="1427.90" y="0" width="1" height="3.5" fill="#222"/></svg>
<span class="abs" style="left:1207.50px;top:394.67px;font-size:11.5px;line-height:1;color:#000;transform:scaleX(0.9571);transform-origin:0 0;">Quick Picks</span>
<div class="abs" style="left:1274.6px;top:389px;width:115.5px;height:24.8px;background:#fff;border:1px solid #a3abb8;"></div>
<div class="abs" style="left:1373.1px;top:391px;width:15px;height:20.8px;background:linear-gradient(#cfdcfd,#b4c8f6);border:1px solid #c6d3f7;border-radius:2px;"></div>
<svg class="abs" style="left:1376.1px;top:398.4px" width="9" height="6" viewBox="0 0 9 6"><path d="M1 1 L4.5 4.5 L8 1" stroke="#4d6185" stroke-width="1.9" fill="none"/></svg>
<div class="abs" style="left:1396px;top:389px;width:13px;height:13px;border:1px solid #1c5180;background:linear-gradient(135deg,#dcdcd7,#fff 70%);"></div>
<span class="abs" style="left:1411.40px;top:395.77px;font-size:11.5px;line-height:1;color:#000;transform:scaleX(0.9294);transform-origin:0 0;">Auto</span>
<span class="abs" style="left:1200.30px;top:428.47px;font-size:11.5px;line-height:1;color:#000;transform:scaleX(0.9580);transform-origin:0 0;">Analogue Gain</span>
<div class="abs" style="left:1289px;top:430.6px;width:106px;height:3.6px;border-top:1px solid #b4b2a6;border-radius:1px;background:#fbfbf6;"></div>
<svg class="abs" style="left:1343px;top:422.9px" width="11" height="20" viewBox="0 0 11 20"><path d="M1.5 0.5 H9.5 Q10.5 0.5 10.5 1.5 V14 L5.5 19.3 L0.5 14 V1.5 Q0.5 0.5 1.5 0.5 Z" fill="#f3f3ef" stroke="#8e9a9e" stroke-width="1"/><path d="M1.5 0.8 H9.5 Q10.2 0.8 10.2 1.8 V3.6 H0.8 V1.8 Q0.8 0.8 1.5 0.8 Z" fill="#3fb44f"/><path d="M9.4 4 V13.6 L5.5 17.8" stroke="#c9cdc6" stroke-width="1.4" fill="none"/></svg>
<svg class="abs" style="left:0;top:444.1px" width="1440" height="3.5"><rect x="1288.60" y="0" width="1" height="3.5" fill="#222"/><rect x="1299.15" y="0" width="1" height="3.5" fill="#222"/><rect x="1309.70" y="0" width="1" height="3.5" fill="#222"/><rect x="1320.25" y="0" width="1" height="3.5" fill="#222"/><rect x="1330.80" y="0" width="1" height="3.5" fill="#222"/><rect x="1341.35" y="0" width="1" height="3.5" fill="#222"/><rect x="1351.90" y="0" width="1" height="3.5" fill="#222"/><rect x="1362.45" y="0" width="1" height="3.5" fill="#222"/><rect x="1373.00" y="0" width="1" height="3.5" fill="#222"/><rect x="1383.55" y="0" width="1" height="3.5" fill="#222"/><rect x="1394.10" y="0" width="1" height="3.5" fill="#222"/></svg>
<div class="abs" style="left:1403px;top:424.4px;width:30px;height:19px;background:#fff;border:1px solid #a3abb8;overflow:hidden;"><span style="position:absolute;left:3.8px;top:2.6px;font-size:12px;line-height:1;">2854</span></div>
<span class="abs" style="left:1200.30px;top:453.07px;font-size:11.5px;line-height:1;color:#000;transform:scaleX(0.9585);transform-origin:0 0;">Frame Rate</span>
<span class="abs" style="left:1200.30px;top:465.47px;font-size:11.5px;line-height:1;color:#000;transform:scaleX(1.0172);transform-origin:0 0;">Limit</span>
<div class="abs" style="left:1286px;top:455px;width:148px;height:19.5px;background:#fff;border:1px solid #a3abb8;"></div>
<div class="abs" style="left:1417px;top:457px;width:15px;height:15.5px;background:linear-gradient(#cfdcfd,#b4c8f6);border:1px solid #c6d3f7;border-radius:2px;"></div>
<svg class="abs" style="left:1420px;top:461.75px" width="9" height="6" viewBox="0 0 9 6"><path d="M1 1 L4.5 4.5 L8 1" stroke="#4d6185" stroke-width="1.9" fill="none"/></svg>
<span class="abs" style="left:1290.30px;top:459.37px;font-size:11.5px;line-height:1;color:#000;transform:scaleX(0.9450);transform-origin:0 0;">Maximum</span>
<span class="abs" style="left:1200.30px;top:490.57px;font-size:11.5px;line-height:1;color:#000;transform:scaleX(0.9789);transform-origin:0 0;">Auto Exp Target</span>
<div class="abs" style="left:1289px;top:492.6px;width:106px;height:3.6px;border-top:1px solid #b4b2a6;border-radius:1px;background:#fbfbf6;"></div>
<svg class="abs" style="left:1336.3px;top:485.09999999999997px" width="11" height="20" viewBox="0 0 11 20"><path d="M1.5 0.5 H9.5 Q10.5 0.5 10.5 1.5 V14 L5.5 19.3 L0.5 14 V1.5 Q0.5 0.5 1.5 0.5 Z" fill="#f3f3ef" stroke="#8e9a9e" stroke-width="1"/><path d="M1.5 0.8 H9.5 Q10.2 0.8 10.2 1.8 V3.6 H0.8 V1.8 Q0.8 0.8 1.5 0.8 Z" fill="#3fb44f"/><path d="M9.4 4 V13.6 L5.5 17.8" stroke="#c9cdc6" stroke-width="1.4" fill="none"/></svg>
<svg class="abs" style="left:0;top:505.5px" width="1440" height="3.5"><rect x="1288.60" y="0" width="1" height="3.5" fill="#222"/><rect x="1312.68" y="0" width="1" height="3.5" fill="#222"/><rect x="1336.76" y="0" width="1" height="3.5" fill="#222"/><rect x="1360.84" y="0" width="1" height="3.5" fill="#222"/><rect x="1384.92" y="0" width="1" height="3.5" fill="#222"/><rect x="1394.10" y="0" width="1" height="3.5" fill="#222"/></svg>
<div class="abs" style="left:1403px;top:485.9px;width:30px;height:19.5px;background:#fff;border:1px solid #a3abb8;overflow:hidden;"></div>
<span class="abs" style="left:1408.20px;top:491.37px;font-size:11.5px;line-height:1;color:#000;transform:scaleX(0.9277);transform-origin:0 0;">120</span>
<span class="abs" style="left:1200.30px;top:522.37px;font-size:11.5px;line-height:1;color:#000;transform:scaleX(0.9599);transform-origin:0 0;">USB Speed</span>
<div class="abs" style="left:1289px;top:524.6px;width:106px;height:3.6px;border-top:1px solid #b4b2a6;border-radius:1px;background:#fbfbf6;"></div>
<svg class="abs" style="left:1284.3px;top:516.9px" width="11" height="20" viewBox="0 0 11 20"><path d="M1.5 0.5 H9.5 Q10.5 0.5 10.5 1.5 V14 L5.5 19.3 L0.5 14 V1.5 Q0.5 0.5 1.5 0.5 Z" fill="#f3f3ef" stroke="#8e9a9e" stroke-width="1"/><path d="M1.5 0.8 H9.5 Q10.2 0.8 10.2 1.8 V3.6 H0.8 V1.8 Q0.8 0.8 1.5 0.8 Z" fill="#3fb44f"/><path d="M9.4 4 V13.6 L5.5 17.8" stroke="#c9cdc6" stroke-width="1.4" fill="none"/></svg>
<svg class="abs" style="left:0;top:537.5px" width="1440" height="3.5"><rect x="1288.60" y="0" width="1" height="3.5" fill="#222"/><rect x="1341.80" y="0" width="1" height="3.5" fill="#222"/><rect x="1394.10" y="0" width="1" height="3.5" fill="#222"/></svg>
<div class="abs" style="left:1403px;top:517.6999999999999px;width:30px;height:19.5px;background:#fff;border:1px solid #a3abb8;overflow:hidden;"></div>
<span class="abs" style="left:1408.20px;top:523.07px;font-size:11.5px;line-height:1;color:#000;">0</span>
<div class="abs" style="left:1199.5px;top:547px;width:237px;height:23px;border:1px solid #d6d4c3;border-radius:4px;"></div>
<svg class="abs" style="left:1201.2px;top:548.1999999999999px" width="20" height="20" viewBox="-10 -10 20 20"><circle cx="0" cy="0" r="8.85" fill="#fff" stroke="#3a3a3a" stroke-width="1.1"/><path d="M-3.6 -1.6 L0 1.9 L3.6 -1.6" stroke="#26262a" stroke-width="2.3" fill="none" stroke-linecap="butt" stroke-linejoin="miter"/></svg>
<div class="abs" style="left:1416px;top:554.4px;width:13.5px;height:2.4px;background:#3a3a34;border-radius:1px;"></div>
<div class="abs" style="left:1416px;top:558.6px;width:13.5px;height:2.4px;background:#3a3a34;border-radius:1px;"></div>
<div class="abs" style="left:1416px;top:562.8px;width:13.5px;height:2.4px;background:#3a3a34;border-radius:1px;"></div>
<span class="abs" style="left:1225.40px;top:552.24px;font-size:12px;line-height:1;color:#000;font-weight:bold;letter-spacing:-0.740px;">Image Controls</span>
<div class="abs" style="left:1199.5px;top:572px;width:237px;height:51.5px;border:1px solid #d6d4c3;border-radius:4px;"></div>
<svg class="abs" style="left:1201.2px;top:573.1px" width="20" height="20" viewBox="-10 -10 20 20"><circle cx="0" cy="0" r="8.85" fill="#fff" stroke="#3a3a3a" stroke-width="1.1"/><path d="M-3.6 1.9 L0 -1.6 L3.6 1.9" stroke="#26262a" stroke-width="2.3" fill="none" stroke-linecap="butt" stroke-linejoin="miter"/></svg>
<div class="abs" style="left:1416px;top:579.4px;width:13.5px;height:2.4px;background:#3a3a34;border-radius:1px;"></div>
<div class="abs" style="left:1416px;top:583.6px;width:13.5px;height:2.4px;background:#3a3a34;border-radius:1px;"></div>
<div class="abs" style="left:1416px;top:587.8px;width:13.5px;height:2.4px;background:#3a3a34;border-radius:1px;"></div>
<span class="abs" style="left:1225.40px;top:577.44px;font-size:12px;line-height:1;color:#000;font-weight:bold;letter-spacing:-0.829px;">Preprocessing</span>
<span class="abs" style="left:1200.80px;top:603.67px;font-size:11.5px;line-height:1;color:#000;transform:scaleX(0.9586);transform-origin:0 0;">Subtract Dark</span>
<div class="abs" style="left:1285px;top:598.7px;width:52px;height:21.5px;border:1px solid #1f3a5f;border-radius:3px;background:linear-gradient(#fdfdfb,#f3f2ea 80%,#dcdacb);box-shadow:inset 0 0 0 1px #bfd0ee;"></div>
<span class="abs" style="left:1288.50px;top:604.07px;font-size:11.5px;line-height:1;color:#000;transform:scaleX(0.9429);transform-origin:0 0;">Browse...</span>
<div class="abs" style="left:1340px;top:599px;width:94px;height:19.5px;background:#fff;border:1px solid #a3abb8;"></div>
<div class="abs" style="left:1417px;top:601px;width:15px;height:15.5px;background:linear-gradient(#cfdcfd,#b4c8f6);border:1px solid #c6d3f7;border-radius:2px;"></div>
<svg class="abs" style="left:1420px;top:605.75px" width="9" height="6" viewBox="0 0 9 6"><path d="M1 1 L4.5 4.5 L8 1" stroke="#4d6185" stroke-width="1.9" fill="none"/></svg>
<span class="abs" style="left:1344.30px;top:604.07px;font-size:11.5px;line-height:1;color:#000;transform:scaleX(0.9345);transform-origin:0 0;">None</span>
<div class="abs" style="left:1199.5px;top:626.5px;width:237px;height:118.5px;border:1px solid #d6d4c3;border-radius:4px;"></div>
<svg class="abs" style="left:1201.2px;top:628.1px" width="20" height="20" viewBox="-10 -10 20 20"><circle cx="0" cy="0" r="8.85" fill="#fff" stroke="#3a3a3a" stroke-width="1.1"/><path d="M-3.6 1.9 L0 -1.6 L3.6 1.9" stroke="#26262a" stroke-width="2.3" fill="none" stroke-linecap="butt" stroke-linejoin="miter"/></svg>
<div class="abs" style="left:1416px;top:634.4px;width:13.5px;height:2.4px;background:#3a3a34;border-radius:1px;"></div>
<div class="abs" style="left:1416px;top:638.6px;width:13.5px;height:2.4px;background:#3a3a34;border-radius:1px;"></div>
<div class="abs" style="left:1416px;top:642.8px;width:13.5px;height:2.4px;background:#3a3a34;border-radius:1px;"></div>
<span class="abs" style="left:1225.40px;top:632.24px;font-size:12px;line-height:1;color:#000;font-weight:bold;letter-spacing:-0.766px;">Display Controls</span>
<span class="abs" style="left:1200.80px;top:659.37px;font-size:11.5px;line-height:1;color:#000;transform:scaleX(0.9522);transform-origin:0 0;">Display Gamma</span>
<div class="abs" style="left:1289px;top:661.6px;width:106px;height:3.6px;border-top:1px solid #b4b2a6;border-radius:1px;background:#fbfbf6;"></div>
<svg class="abs" style="left:1303.1px;top:653.5px" width="11" height="20" viewBox="0 0 11 20"><path d="M1.5 0.5 H9.5 Q10.5 0.5 10.5 1.5 V14 L5.5 19.3 L0.5 14 V1.5 Q0.5 0.5 1.5 0.5 Z" fill="#f3f3ef" stroke="#8e9a9e" stroke-width="1"/><path d="M1.5 0.8 H9.5 Q10.2 0.8 10.2 1.8 V3.6 H0.8 V1.8 Q0.8 0.8 1.5 0.8 Z" fill="#3fb44f"/><path d="M9.4 4 V13.6 L5.5 17.8" stroke="#c9cdc6" stroke-width="1.4" fill="none"/></svg>
<svg class="abs" style="left:0;top:674.5px" width="1440" height="3.5"><rect x="1289.00" y="0" width="1" height="3.5" fill="#222"/><rect x="1299.53" y="0" width="1" height="3.5" fill="#222"/><rect x="1310.06" y="0" width="1" height="3.5" fill="#222"/><rect x="1320.59" y="0" width="1" height="3.5" fill="#222"/><rect x="1331.12" y="0" width="1" height="3.5" fill="#222"/><rect x="1341.65" y="0" width="1" height="3.5" fill="#222"/><rect x="1352.18" y="0" width="1" height="3.5" fill="#222"/><rect x="1362.71" y="0" width="1" height="3.5" fill="#222"/><rect x="1373.24" y="0" width="1" height="3.5" fill="#222"/><rect x="1383.77" y="0" width="1" height="3.5" fill="#222"/><rect x="1394.30" y="0" width="1" height="3.5" fill="#222"/></svg>
<div class="abs" style="left:1403px;top:654.6999999999999px;width:30px;height:19.7px;background:#fff;border:1px solid #a3abb8;overflow:hidden;"></div>
<span class="abs" style="left:1408.40px;top:660.07px;font-size:11.5px;line-height:1;color:#000;">1</span>
<span class="abs" style="left:1200.80px;top:691.67px;font-size:11.5px;line-height:1;color:#000;transform:scaleX(0.9576);transform-origin:0 0;">Display Contrast</span>
<div class="abs" style="left:1289px;top:693.6px;width:106px;height:3.6px;border-top:1px solid #b4b2a6;border-radius:1px;background:#fbfbf6;"></div>
<svg class="abs" style="left:1294.6px;top:685.9px" width="11" height="20" viewBox="0 0 11 20"><path d="M1.5 0.5 H9.5 Q10.5 0.5 10.5 1.5 V14 L5.5 19.3 L0.5 14 V1.5 Q0.5 0.5 1.5 0.5 Z" fill="#f3f3ef" stroke="#8e9a9e" stroke-width="1"/><path d="M1.5 0.8 H9.5 Q10.2 0.8 10.2 1.8 V3.6 H0.8 V1.8 Q0.8 0.8 1.5 0.8 Z" fill="#3fb44f"/><path d="M9.4 4 V13.6 L5.5 17.8" stroke="#c9cdc6" stroke-width="1.4" fill="none"/></svg>
<svg class="abs" style="left:0;top:706.5px" width="1440" height="3.5"><rect x="1289.00" y="0" width="1" height="3.5" fill="#222"/><rect x="1299.53" y="0" width="1" height="3.5" fill="#222"/><rect x="1310.06" y="0" width="1" height="3.5" fill="#222"/><rect x="1320.59" y="0" width="1" height="3.5" fill="#222"/><rect x="1331.12" y="0" width="1" height="3.5" fill="#222"/><rect x="1341.65" y="0" width="1" height="3.5" fill="#222"/><rect x="1352.18" y="0" width="1" height="3.5" fill="#222"/><rect x="1362.71" y="0" width="1" height="3.5" fill="#222"/><rect x="1373.24" y="0" width="1" height="3.5" fill="#222"/><rect x="1383.77" y="0" width="1" height="3.5" fill="#222"/><rect x="1394.30" y="0" width="1" height="3.5" fill="#222"/></svg>
<div class="abs" style="left:1403px;top:686.6999999999999px;width:30px;height:19.7px;background:#fff;border:1px solid #a3abb8;overflow:hidden;"></div>
<span class="abs" style="left:1408.40px;top:692.07px;font-size:11.5px;line-height:1;color:#000;">1</span>
<span class="abs" style="left:1200.80px;top:717.57px;font-size:11.5px;line-height:1;color:#000;transform:scaleX(0.9332);transform-origin:0 0;">Display</span>
<span class="abs" style="left:1200.80px;top:729.07px;font-size:11.5px;line-height:1;color:#000;transform:scaleX(0.9477);transform-origin:0 0;">Brightness</span>
<div class="abs" style="left:1289px;top:725.6px;width:106px;height:3.6px;border-top:1px solid #b4b2a6;border-radius:1px;background:#fbfbf6;"></div>
<svg class="abs" style="left:1336.6px;top:717.8px" width="11" height="20" viewBox="0 0 11 20"><path d="M1.5 0.5 H9.5 Q10.5 0.5 10.5 1.5 V14 L5.5 19.3 L0.5 14 V1.5 Q0.5 0.5 1.5 0.5 Z" fill="#f3f3ef" stroke="#8e9a9e" stroke-width="1"/><path d="M1.5 0.8 H9.5 Q10.2 0.8 10.2 1.8 V3.6 H0.8 V1.8 Q0.8 0.8 1.5 0.8 Z" fill="#3fb44f"/><path d="M9.4 4 V13.6 L5.5 17.8" stroke="#c9cdc6" stroke-width="1.4" fill="none"/></svg>
<svg class="abs" style="left:0;top:738.7px" width="1440" height="3.5"><rect x="1289.00" y="0" width="1" height="3.5" fill="#222"/><rect x="1294.27" y="0" width="1" height="3.5" fill="#222"/><rect x="1299.53" y="0" width="1" height="3.5" fill="#222"/><rect x="1304.80" y="0" width="1" height="3.5" fill="#222"/><rect x="1310.06" y="0" width="1" height="3.5" fill="#222"/><rect x="1315.33" y="0" width="1" height="3.5" fill="#222"/><rect x="1320.59" y="0" width="1" height="3.5" fill="#222"/><rect x="1325.86" y="0" width="1" height="3.5" fill="#222"/><rect x="1331.12" y="0" width="1" height="3.5" fill="#222"/><rect x="1336.38" y="0" width="1" height="3.5" fill="#222"/><rect x="1341.65" y="0" width="1" height="3.5" fill="#222"/><rect x="1346.91" y="0" width="1" height="3.5" fill="#222"/><rect x="1352.18" y="0" width="1" height="3.5" fill="#222"/><rect x="1357.44" y="0" width="1" height="3.5" fill="#222"/><rect x="1362.71" y="0" width="1" height="3.5" fill="#222"/><rect x="1367.97" y="0" width="1" height="3.5" fill="#222"/><rect x="1373.24" y="0" width="1" height="3.5" fill="#222"/><rect x="1378.51" y="0" width="1" height="3.5" fill="#222"/><rect x="1383.77" y="0" width="1" height="3.5" fill="#222"/><rect x="1389.04" y="0" width="1" height="3.5" fill="#222"/><rect x="1394.30" y="0" width="1" height="3.5" fill="#222"/></svg>
<div class="abs" style="left:1403px;top:718.9px;width:30px;height:19.7px;background:#fff;border:1px solid #a3abb8;overflow:hidden;"></div>
<span class="abs" style="left:1408.40px;top:724.07px;font-size:11.5px;line-height:1;color:#000;">1</span>
<div class="abs" style="left:1438px;top:93px;width:1px;height:749.5px;background:#9c9a8e;"></div>
<div class="abs" style="left:1197px;top:841.6px;width:242px;height:1.2px;background:#8f8d82;"></div>
<div class="abs" style="left:0;top:630px;width:1193px;height:18px;background:linear-gradient(#1f74f2 0%,#1367ee 30%,#0a5ae6 60%,#0750dc 100%);"></div>
<span class="abs" style="left:6.20px;top:633.84px;font-size:12px;line-height:1;color:#fff;font-weight:bold;letter-spacing:-0.738px;">Live Stack</span>
<svg class="abs" style="left:1161px;top:634.5px" width="9" height="11" viewBox="0 0 9 11"><path d="M2.5 0.5 H6.5 V6 H2.5 Z M1 6.5 H8 M4.5 6.5 V10.5" stroke="#fff" stroke-width="1" fill="none"/><path d="M5.6 1 V6" stroke="#fff" stroke-width="1"/></svg>
<svg class="abs" style="left:1178px;top:635.5px" width="9" height="9" viewBox="0 0 9 9"><path d="M0.8 0.8 L8.2 8.2 M8.2 0.8 L0.8 8.2" stroke="#fff" stroke-width="1.5"/></svg>
<div class="abs" style="left:0;top:648px;width:1193px;height:195px;background:#ece9d8;border-top:1.4px solid #faf9f5;"></div>
<div class="abs" style="left:-0.5px;top:654.5px;width:170px;height:60.5px;border:1px solid #d0d0bf;border-radius:4px;"></div>
<div class="abs" style="left:6.699999999999999px;top:652.5px;width:50.7px;height:5px;background:#ece9d8;"></div>
<span class="abs" style="left:8.70px;top:648.67px;font-size:11.5px;line-height:1;color:#2c53b8;transform:scaleX(0.9742);transform-origin:0 0;">Overview</span>
<span class="abs" style="left:8.40px;top:663.67px;font-size:11.5px;line-height:1;color:#000;transform:scaleX(0.9411);transform-origin:0 0;">Frames Stacked:</span>
<span class="abs" style="left:108.20px;top:663.67px;font-size:11.5px;line-height:1;color:#000;transform:scaleX(0.9065);transform-origin:0 0;">26</span>
<span class="abs" style="left:8.40px;top:679.87px;font-size:11.5px;line-height:1;color:#000;transform:scaleX(0.9434);transform-origin:0 0;">Frames Ignored:</span>
<span class="abs" style="left:108.20px;top:679.87px;font-size:11.5px;line-height:1;color:#000;">0</span>
<span class="abs" style="left:8.40px;top:695.87px;font-size:11.5px;line-height:1;color:#000;transform:scaleX(0.9538);transform-origin:0 0;">Total Exposure:</span>
<span class="abs" style="left:108.20px;top:695.87px;font-size:11.5px;line-height:1;color:#000;transform:scaleX(0.9470);transform-origin:0 0;">26,52s</span>
<div class="abs" style="left:-0.5px;top:722.3px;width:170px;height:37px;border:1px solid #d0d0bf;border-radius:4px;"></div>
<div class="abs" style="left:7.300000000000001px;top:720.3px;width:31.099999999999998px;height:5px;background:#ece9d8;"></div>
<span class="abs" style="left:9.30px;top:716.47px;font-size:11.5px;line-height:1;color:#2c53b8;transform:scaleX(0.9416);transform-origin:0 0;">Show</span>
<svg class="abs" style="left:5.4px;top:728.1px" width="14" height="14" viewBox="-7 -7 14 14"><circle cx="0" cy="0" r="5.9" fill="#f4f4f0" stroke="#1c5180" stroke-width="1"/><circle cx="0" cy="0" r="2.6" fill="#33b433"/><circle cx="-0.6" cy="-0.6" r="1.2" fill="#7fdd7f"/></svg>
<span class="abs" style="left:21.20px;top:728.47px;font-size:11.5px;line-height:1;color:#000;transform:scaleX(0.9386);transform-origin:0 0;">Stack</span>
<svg class="abs" style="left:5.4px;top:741.1px" width="14" height="14" viewBox="-7 -7 14 14"><circle cx="0" cy="0" r="5.9" fill="#f4f4f0" stroke="#1c5180" stroke-width="1"/></svg>
<span class="abs" style="left:21.20px;top:741.47px;font-size:11.5px;line-height:1;color:#000;transform:scaleX(0.9486);transform-origin:0 0;">Individual Frames</span>
<div class="abs" style="left:170.5px;top:654.5px;width:168.5px;height:105px;border:1px solid #d0d0bf;border-radius:4px;"></div>
<div class="abs" style="left:176.8px;top:652.5px;width:45.099999999999994px;height:5px;background:#ece9d8;"></div>
<span class="abs" style="left:178.80px;top:648.67px;font-size:11.5px;line-height:1;color:#2c53b8;transform:scaleX(0.9596);transform-origin:0 0;">Controls</span>
<div class="abs" style="left:178.2px;top:661.8px;width:13px;height:13px;border:1px solid #1c5180;background:linear-gradient(135deg,#dcdcd7,#fff 70%);"></div>
<svg class="abs" style="left:180.7px;top:664.3px" width="8" height="8" viewBox="0 0 8 8"><path d="M0.8 3.2 L3 5.6 L7.2 1" stroke="#21a121" stroke-width="1.9" fill="none"/></svg>
<span class="abs" style="left:192.80px;top:663.67px;font-size:11.5px;line-height:1;color:#000;transform:scaleX(0.9550);transform-origin:0 0;">Align Frames</span>
<div class="abs" style="left:178.2px;top:678.8px;width:13px;height:13px;border:1px solid #1c5180;background:linear-gradient(135deg,#dcdcd7,#fff 70%);"></div>
<span class="abs" style="left:192.80px;top:680.67px;font-size:11.5px;line-height:1;color:#000;transform:scaleX(0.9562);transform-origin:0 0;">Enable FWHM Filter</span>
<div class="abs" style="left:178.2px;top:695.8px;width:13px;height:13px;border:1px solid #cac8bb;background:#fff;"></div>
<span class="abs" style="left:192.80px;top:697.87px;font-size:11.5px;line-height:1;color:#aca899;transform:scaleX(0.9499);transform-origin:0 0;">Subtract a Dark Frame</span>
<div class="abs" style="left:178.2px;top:712.8px;width:13px;height:13px;border:1px solid #1c5180;background:linear-gradient(135deg,#dcdcd7,#fff 70%);"></div>
<span class="abs" style="left:192.80px;top:714.87px;font-size:11.5px;line-height:1;color:#000;transform:scaleX(0.9464);transform-origin:0 0;">AutoSave</span>
<div class="abs" style="left:178.2px;top:729.8px;width:13px;height:13px;border:1px solid #1c5180;background:linear-gradient(135deg,#dcdcd7,#fff 70%);"></div>
<span class="abs" style="left:192.80px;top:731.87px;font-size:11.5px;line-height:1;color:#000;transform:scaleX(0.9528);transform-origin:0 0;">Save Individual Frames</span>
<div class="abs" style="left:3.7px;top:764.6px;width:73.5px;height:22px;border:1px solid #003c74;border-radius:3px;background:linear-gradient(#ffffff,#f5f4ee 60%,#e6e3d6);box-shadow:inset 0 0 0 2px #a9c2f0;"></div>
<span class="abs" style="left:27.40px;top:770.77px;font-size:11.5px;line-height:1;color:#000;transform:scaleX(0.9496);transform-origin:0 0;">Clear</span>
<div class="abs" style="left:84px;top:764.6px;width:74.6px;height:22px;border:1px solid #858585;border-radius:3px;background:linear-gradient(#f6f6f6 0%,#ececec 48%,#dddddd 52%,#cdcdcd 100%);box-shadow:inset 0 0 0 1px rgba(255,255,255,.7);"></div>
<span class="abs" style="left:100.50px;top:770.77px;font-size:11.5px;line-height:1;color:#000;transform:scaleX(0.9459);transform-origin:0 0;">Save</span>
<div class="abs" style="left:142px;top:765px;width:1px;height:21px;background:#8a8a8a;"></div>
<svg class="abs" style="left:147px;top:773.5px" width="7" height="4"><path d="M0.2 0.2 H6.8 L3.5 3.8 Z" fill="#000"/></svg>
<div class="abs" style="left:165.8px;top:764.6px;width:73.2px;height:22px;border:1px solid #003c74;border-radius:3px;background:linear-gradient(#ffffff,#f5f4ee 60%,#e6e3d6);box-shadow:inset 0 -2px 1px #d6d0c0;"></div>
<span class="abs" style="left:187.20px;top:770.77px;font-size:11.5px;line-height:1;color:#000;transform:scaleX(0.9353);transform-origin:0 0;">Pause</span>
<div class="abs" style="left:340.5px;top:667px;width:851.2px;height:176.5px;background:linear-gradient(#fdfdfe 0%,#fbfbfc 50%,#f5f4ef 100%);border:1px solid #919b9c;"></div>
<div class="abs" style="left:342.4px;top:649.8px;width:56.00000000000002px;height:17.7px;border:1px solid #919b9c;border-bottom:none;border-radius:3px 3px 0 0;background:linear-gradient(#ffffff,#f6f6f2 70%,#eeede4);"></div>
<span class="abs" style="left:355.00px;top:653.87px;font-size:11.5px;line-height:1;color:#000;transform:scaleX(0.9506);transform-origin:0 0;">Status</span>
<div class="abs" style="left:478.5px;top:649.8px;width:73.9px;height:17.7px;border:1px solid #919b9c;border-bottom:none;border-radius:3px 3px 0 0;background:linear-gradient(#ffffff,#f6f6f2 70%,#eeede4);"></div>
<span class="abs" style="left:490.00px;top:653.87px;font-size:11.5px;line-height:1;color:#000;transform:scaleX(0.9679);transform-origin:0 0;">Alignment</span>
<div class="abs" style="left:553.6px;top:649.8px;width:50.299999999999976px;height:17.7px;border:1px solid #919b9c;border-bottom:none;border-radius:3px 3px 0 0;background:linear-gradient(#ffffff,#f6f6f2 70%,#eeede4);"></div>
<span class="abs" style="left:566.60px;top:653.87px;font-size:11.5px;line-height:1;color:#000;transform:scaleX(0.9545);transform-origin:0 0;">Filter</span>
<div class="abs" style="left:605px;top:649.8px;width:75.4px;height:17.7px;border:1px solid #919b9c;border-bottom:none;border-radius:3px 3px 0 0;background:linear-gradient(#ffffff,#f6f6f2 70%,#eeede4);"></div>
<span class="abs" style="left:618.20px;top:653.87px;font-size:11.5px;line-height:1;color:#000;transform:scaleX(0.9388);transform-origin:0 0;">Darks etc.</span>
<div class="abs" style="left:681.5px;top:649.8px;width:44.9px;height:17.7px;border:1px solid #919b9c;border-bottom:none;border-radius:3px 3px 0 0;background:linear-gradient(#ffffff,#f6f6f2 70%,#eeede4);"></div>
<span class="abs" style="left:694.60px;top:653.87px;font-size:11.5px;line-height:1;color:#000;transform:scaleX(0.9329);transform-origin:0 0;">Log</span>
<div class="abs" style="left:398.3px;top:647.8px;width:80px;height:20.2px;border:1px solid #919b9c;border-bottom:none;border-radius:3px 3px 0 0;background:#fcfcfe;"></div>
<div class="abs" style="left:398.8px;top:647.8px;width:79px;height:2.8px;border-radius:3px 3px 0 0;background:linear-gradient(#e89a3a,#fbd48a);"></div>
<span class="abs" style="left:413.20px;top:653.87px;font-size:11.5px;line-height:1;color:#000;transform:scaleX(0.9541);transform-origin:0 0;">Histogram</span>
<div class="abs" style="left:367.7px;top:677.5px;width:4px;height:146px;border:1px solid #d4d2c4;border-right-color:#fbfbf7;border-radius:2px;background:#f4f3ea;"></div>
<svg class="abs" style="left:359.3px;top:750.6px" width="22" height="12" viewBox="0 0 22 12"><rect x="0.5" y="0.5" width="21" height="10.6" rx="2" fill="#f1f1ed" stroke="#8e9a9e"/><rect x="1" y="1" width="2.6" height="9.6" rx="1" fill="#3fb44f"/><rect x="18.4" y="1" width="2.6" height="9.6" rx="1" fill="#3fb44f"/><path d="M4 9.6 H18" stroke="#c9cdc6" stroke-width="1.4"/></svg>
<span class="abs" style="left:345.30px;top:830.87px;font-size:11.5px;line-height:1;color:#000;transform:scaleX(0.9265);transform-origin:0 0;">Gamma</span>
<div class="abs" style="left:400px;top:678.9px;width:783px;height:4px;border:1px solid #d4d2c4;border-bottom-color:#fbfbf7;border-radius:2px;background:#f4f3ea;"></div>
<div class="abs" style="left:743px;top:673px;width:95px;height:12px;background:#fcfcfe;"></div>
<span class="abs" style="left:745.10px;top:673.57px;font-size:11.5px;line-height:1;color:#000;transform:scaleX(0.9554);transform-origin:0 0;">Adjust White Level</span>
<svg class="abs" style="left:647.6px;top:672.2px" width="11" height="17" viewBox="0 0 11 17"><rect x="0.5" y="0.5" width="10" height="16" rx="2" fill="#f3f3ef" stroke="#8e9a9e"/><rect x="1" y="1" width="9" height="2.2" rx="1" fill="#7fcf8a"/><rect x="1" y="13.6" width="9" height="2.4" rx="1" fill="#4fb85f"/></svg>
<svg class="abs" style="left:396px;top:691px" width="791" height="133.39999999999998" viewBox="396 691 791 133.39999999999998"><rect x="396" y="691" width="791" height="133.39999999999998" fill="#808080"/><rect x="651" y="691" width="536" height="1.2" fill="#e35a66"/><rect x="403.93" y="691" width="1.5" height="18" fill="#e6e6e6"/><rect x="413.25" y="691" width="1.5" height="18" fill="#e6e6e6"/><rect x="422.58" y="691" width="1.5" height="18" fill="#e6e6e6"/><rect x="431.90" y="691" width="1.5" height="18" fill="#e6e6e6"/><rect x="441.23" y="691" width="1.5" height="18" fill="#e6e6e6"/><rect x="450.55" y="691" width="1.5" height="18" fill="#e6e6e6"/><rect x="459.88" y="691" width="1.5" height="18" fill="#e6e6e6"/><rect x="469.20" y="691" width="1.5" height="18" fill="#e6e6e6"/><rect x="478.53" y="691" width="1.5" height="18" fill="#e6e6e6"/><rect x="487.85" y="691" width="1.5" height="31" fill="#e6e6e6"/><rect x="497.18" y="691" width="1.5" height="18" fill="#e6e6e6"/><rect x="506.50" y="691" width="1.5" height="18" fill="#e6e6e6"/><rect x="515.83" y="691" width="1.5" height="18" fill="#e6e6e6"/><rect x="525.15" y="691" width="1.5" height="18" fill="#e6e6e6"/><rect x="534.48" y="691" width="1.5" height="18" fill="#e6e6e6"/><rect x="543.80" y="691" width="1.5" height="18" fill="#e6e6e6"/><rect x="553.12" y="691" width="1.5" height="18" fill="#e6e6e6"/><rect x="562.45" y="691" width="1.5" height="18" fill="#e6e6e6"/><rect x="571.77" y="691" width="1.5" height="18" fill="#e6e6e6"/><rect x="581.10" y="691" width="1.5" height="31" fill="#e6e6e6"/><rect x="590.42" y="691" width="1.5" height="18" fill="#e6e6e6"/><rect x="599.75" y="691" width="1.5" height="18" fill="#e6e6e6"/><rect x="609.08" y="691" width="1.5" height="18" fill="#e6e6e6"/><rect x="618.40" y="691" width="1.5" height="18" fill="#e6e6e6"/><rect x="627.73" y="691" width="1.5" height="18" fill="#e6e6e6"/><rect x="637.05" y="691" width="1.5" height="18" fill="#e6e6e6"/><rect x="646.38" y="691" width="1.5" height="18" fill="#e6e6e6"/><rect x="655.70" y="691" width="1.5" height="18" fill="#e6e6e6"/><rect x="665.02" y="691" width="1.5" height="18" fill="#e6e6e6"/><rect x="674.35" y="691" width="1.5" height="31" fill="#e6e6e6"/><rect x="683.67" y="691" width="1.5" height="18" fill="#e6e6e6"/><rect x="693.00" y="691" width="1.5" height="18" fill="#e6e6e6"/><rect x="702.33" y="691" width="1.5" height="18" fill="#e6e6e6"/><rect x="711.65" y="691" width="1.5" height="18" fill="#e6e6e6"/><rect x="720.98" y="691" width="1.5" height="18" fill="#e6e6e6"/><rect x="730.30" y="691" width="1.5" height="18" fill="#e6e6e6"/><rect x="739.62" y="691" width="1.5" height="18" fill="#e6e6e6"/><rect x="748.95" y="691" width="1.5" height="18" fill="#e6e6e6"/><rect x="758.27" y="691" width="1.5" height="18" fill="#e6e6e6"/><rect x="767.60" y="691" width="1.5" height="31" fill="#e6e6e6"/><rect x="776.92" y="691" width="1.5" height="18" fill="#e6e6e6"/><rect x="786.25" y="691" width="1.5" height="18" fill="#e6e6e6"/><rect x="795.58" y="691" width="1.5" height="18" fill="#e6e6e6"/><rect x="804.90" y="691" width="1.5" height="18" fill="#e6e6e6"/><rect x="814.22" y="691" width="1.5" height="18" fill="#e6e6e6"/><rect x="823.55" y="691" width="1.5" height="18" fill="#e6e6e6"/><rect x="832.88" y="691" width="1.5" height="18" fill="#e6e6e6"/><rect x="842.20" y="691" width="1.5" height="18" fill="#e6e6e6"/><rect x="851.52" y="691" width="1.5" height="18" fill="#e6e6e6"/><rect x="860.85" y="691" width="1.5" height="31" fill="#e6e6e6"/><rect x="870.17" y="691" width="1.5" height="18" fill="#e6e6e6"/><rect x="879.50" y="691" width="1.5" height="18" fill="#e6e6e6"/><rect x="888.83" y="691" width="1.5" height="18" fill="#e6e6e6"/><rect x="898.15" y="691" width="1.5" height="18" fill="#e6e6e6"/><rect x="907.48" y="691" width="1.5" height="18" fill="#e6e6e6"/><rect x="916.80" y="691" width="1.5" height="18" fill="#e6e6e6"/><rect x="926.12" y="691" width="1.5" height="18" fill="#e6e6e6"/><rect x="935.45" y="691" width="1.5" height="18" fill="#e6e6e6"/><rect x="944.77" y="691" width="1.5" height="18" fill="#e6e6e6"/><rect x="954.10" y="691" width="1.5" height="31" fill="#e6e6e6"/><rect x="963.42" y="691" width="1.5" height="18" fill="#e6e6e6"/><rect x="972.75" y="691" width="1.5" height="18" fill="#e6e6e6"/><rect x="982.07" y="691" width="1.5" height="18" fill="#e6e6e6"/><rect x="991.40" y="691" width="1.5" height="18" fill="#e6e6e6"/><rect x="1000.73" y="691" width="1.5" height="18" fill="#e6e6e6"/><rect x="1010.05" y="691" width="1.5" height="18" fill="#e6e6e6"/><rect x="1019.38" y="691" width="1.5" height="18" fill="#e6e6e6"/><rect x="1028.70" y="691" width="1.5" height="18" fill="#e6e6e6"/><rect x="1038.03" y="691" width="1.5" height="18" fill="#e6e6e6"/><rect x="1047.35" y="691" width="1.5" height="31" fill="#e6e6e6"/><rect x="1056.67" y="691" width="1.5" height="18" fill="#e6e6e6"/><rect x="1066.00" y="691" width="1.5" height="18" fill="#e6e6e6"/><rect x="1075.32" y="691" width="1.5" height="18" fill="#e6e6e6"/><rect x="1084.65" y="691" width="1.5" height="18" fill="#e6e6e6"/><rect x="1093.97" y="691" width="1.5" height="18" fill="#e6e6e6"/><rect x="1103.30" y="691" width="1.5" height="18" fill="#e6e6e6"/><rect x="1112.62" y="691" width="1.5" height="18" fill="#e6e6e6"/><rect x="1121.95" y="691" width="1.5" height="18" fill="#e6e6e6"/><rect x="1131.28" y="691" width="1.5" height="18" fill="#e6e6e6"/><rect x="1140.60" y="691" width="1.5" height="31" fill="#e6e6e6"/><rect x="1149.92" y="691" width="1.5" height="18" fill="#e6e6e6"/><rect x="1159.25" y="691" width="1.5" height="18" fill="#e6e6e6"/><rect x="1168.57" y="691" width="1.5" height="18" fill="#e6e6e6"/><rect x="1177.90" y="691" width="1.5" height="18" fill="#e6e6e6"/><polygon points="396.0,825.0 396.3,750.5 398.5,747.9 400.5,751.2 402.5,748.9 404.4,751.9 406.7,749.9 409.0,751.2 411.6,744.0 414.2,717.9 416.8,694.4 418.1,692.5 419.8,695.7 422.4,724.4 425.3,747.9 427.9,752.2 430.5,754.5 433.1,757.1 435.1,754.5 437.7,758.4 440.3,753.8 442.9,731.0 446.2,708.1 448.8,697.7 450.8,695.7 452.7,699.0 454.7,705.5 456.6,710.1 458.6,705.5 460.9,698.3 462.8,696.7 464.8,700.9 467.1,714.6 469.7,732.6 473.0,748.9 476.2,755.4 480.1,761.0 483.4,763.6 486.7,768.5 488.3,771.2 489.9,770.5 491.6,770.1 493.2,770.8 494.8,770.4 496.4,768.3 498.1,769.4 499.7,773.4 501.3,772.0 503.0,774.4 504.6,772.9 506.2,779.7 507.9,777.8 509.5,778.6 511.1,780.5 512.8,782.2 514.4,778.2 516.0,783.4 517.7,784.6 519.3,782.5 520.9,780.9 522.6,780.5 524.2,785.8 525.8,786.9 527.5,786.8 529.1,785.8 530.7,785.3 532.3,787.3 534.0,784.6 535.6,786.0 537.2,788.0 538.9,789.7 540.3,791.4 541.8,787.2 543.2,793.5 544.7,787.7 546.1,794.7 547.6,790.0 549.0,794.5 550.5,794.9 551.9,793.6 553.4,796.7 554.8,793.6 556.3,795.6 557.7,793.1 559.2,797.3 560.6,792.6 562.1,798.4 563.5,796.7 565.0,796.9 566.4,793.5 567.9,799.9 569.3,795.8 570.8,794.2 572.2,795.8 573.7,794.4 575.1,796.4 576.6,799.6 578.0,798.9 579.5,802.1 580.9,799.9 582.4,801.7 583.8,801.8 585.3,801.3 586.7,799.3 588.2,798.6 589.6,798.3 591.1,801.5 592.6,801.6 594.1,799.4 595.5,803.4 597.0,800.8 598.5,802.9 600.0,802.9 601.5,803.7 603.0,800.7 604.4,801.7 605.9,805.0 607.4,804.4 608.4,804.0 609.2,821.0 610.1,803.3 611.4,803.6 612.8,805.2 614.0,822.4 614.9,821.9 616.2,804.4 617.5,803.4 618.8,824.5 619.7,803.0 620.8,803.0 622.0,805.6 623.3,809.8 624.2,806.4 625.4,804.9 626.6,807.9 627.4,810.9 628.3,802.9 629.5,821.3 630.8,802.7 632.2,801.9 633.1,802.8 634.0,821.3 635.4,806.6 636.6,803.6 637.7,808.2 638.7,806.1 639.8,806.1 640.6,805.5 641.4,804.2 642.7,805.1 643.5,803.7 644.7,807.0 645.6,804.3 646.9,824.5 648.2,806.3 649.4,824.5 650.5,804.1 651.8,807.4 652.7,807.1 653.6,824.5 654.5,807.2 655.5,822.6 656.7,804.9 657.7,810.5 658.8,805.0 660.1,805.3 661.2,806.1 662.5,810.8 663.5,808.6 664.4,805.6 665.8,812.1 666.9,820.7 667.9,809.8 668.9,806.6 670.3,807.9 671.3,824.5 672.6,823.7 673.8,809.6 674.7,824.5 675.8,810.9 677.1,824.5 677.9,824.5 679.3,808.1 680.3,805.9 681.5,806.0 682.6,807.3 683.4,824.5 684.6,807.4 685.7,811.2 686.9,809.3 688.0,806.0 689.1,810.5 690.4,807.3 691.5,822.6 692.8,807.3 693.7,810.7 694.6,807.2 695.9,824.5 697.2,822.7 698.5,808.0 699.8,822.0 701.0,823.7 701.8,808.6 702.7,823.0 703.8,809.6 704.8,817.1 705.8,806.6 707.1,812.2 708.2,807.1 709.1,812.5 710.3,824.5 711.2,807.5 712.2,810.2 713.2,813.7 714.2,824.5 715.3,809.2 716.5,821.9 717.7,811.1 719.0,809.2 720.0,816.5 721.1,824.5 722.4,810.6 723.3,824.5 724.5,811.1 725.4,813.4 726.3,821.2 727.3,811.4 728.1,824.5 729.2,824.5 730.6,824.5 731.4,820.5 732.8,811.1 734.0,809.3 735.2,809.7 736.6,815.2 737.5,809.4 738.6,822.5 739.5,814.8 740.4,811.0 741.6,814.5 742.6,824.5 743.5,815.6 744.5,824.5 745.8,824.5 746.8,810.3 747.8,824.5 749.0,820.4 750.0,824.5 751.3,810.0 752.5,813.5 753.7,824.5 754.6,810.2 755.9,823.6 757.2,824.5 758.4,813.2 759.6,821.9 760.7,809.2 761.8,815.2 762.8,814.3 763.8,810.5 765.2,822.5 766.0,824.5 766.8,814.1 768.1,822.4 769.4,817.5 770.4,813.4 771.7,812.4 772.5,824.5 773.4,814.4 774.6,824.5 775.8,824.5 777.2,810.8 778.2,810.4 779.1,809.7 780.2,824.5 781.1,824.5 781.9,824.5 783.0,824.5 784.1,820.2 785.1,824.5 786.5,824.5 787.6,821.4 788.5,821.1 789.7,812.4 790.7,813.8 791.7,823.9 792.9,824.5 793.7,824.5 794.5,814.9 795.6,821.9 797.0,824.5 798.2,812.2 799.0,824.5 800.2,817.9 801.5,820.3 802.5,824.5 803.8,813.6 804.7,812.3 805.8,820.1 806.8,815.4 807.7,822.6 809.0,816.3 810.0,824.5 811.1,814.4 812.2,824.5 813.4,824.5 814.3,814.4 815.7,824.5 816.7,811.8 818.0,811.5 819.3,824.5 820.7,820.3 821.7,822.5 822.9,813.8 823.9,817.3 825.1,815.9 826.2,815.4 827.3,824.5 828.6,813.7 829.7,824.5 831.1,824.5 832.0,824.5 833.3,818.1 834.7,812.2 836.0,819.7 837.1,813.5 838.1,816.6 839.0,815.9 839.9,814.9 841.1,813.1 842.0,824.5 842.8,822.8 844.2,814.5 845.2,813.9 846.3,821.1 847.4,813.7 848.7,824.5 849.8,814.4 850.6,821.9 852.0,815.8 852.8,812.6 853.7,812.7 854.9,824.5 855.8,815.4 857.0,813.1 858.2,814.6 859.5,812.4 860.7,814.0 861.8,815.5 862.8,816.9 863.7,817.5 864.8,814.4 865.8,813.9 866.9,817.8 868.2,816.3 869.3,823.6 870.2,814.8 871.3,815.3 872.7,824.5 873.9,824.5 875.3,814.6 876.4,824.5 877.3,812.4 878.2,816.1 879.5,816.9 880.8,824.5 881.9,824.5 882.8,820.6 884.1,822.7 885.3,824.5 886.5,824.5 887.8,812.7 889.2,816.4 890.6,824.5 891.5,824.5 892.8,824.5 894.2,817.2 895.1,821.9 896.4,824.5 897.4,818.6 898.5,816.0 899.8,824.5 901.2,821.0 902.1,824.5 902.9,815.9 904.2,824.5 905.5,817.4 906.8,824.5 907.9,821.3 909.0,824.5 910.0,820.2 911.3,818.0 912.3,824.5 913.5,821.1 914.9,824.5 916.0,820.3 917.2,824.5 918.5,815.1 919.8,821.5 920.8,823.4 922.0,824.5 923.1,824.5 924.3,819.1 925.2,824.5 926.3,824.5 927.3,824.5 928.5,816.4 929.8,823.2 931.0,821.5 932.1,818.3 933.2,824.5 934.2,820.7 935.2,824.5 936.2,823.5 937.3,822.8 938.2,818.3 939.0,816.3 940.3,820.7 941.6,824.5 942.5,818.2 943.8,819.3 944.9,818.3 945.9,819.7 946.9,816.6 948.0,817.6 949.3,824.5 950.1,819.4 951.1,824.5 951.9,817.4 952.8,819.2 954.1,819.3 955.0,824.5 956.2,824.5 957.1,819.3 958.1,818.9 959.0,821.4 960.1,818.3 961.4,817.2 962.5,822.7 963.5,824.5 964.6,821.4 965.8,824.5 966.9,824.4 968.0,818.8 969.3,824.5 970.5,822.7 971.7,822.5 972.9,824.5 974.1,821.3 975.1,817.3 976.1,824.5 977.1,817.9 978.1,817.3 979.0,818.2 979.8,817.3 981.1,819.1 982.1,816.9 983.5,817.0 984.4,824.5 985.3,823.2 986.6,817.4 987.5,823.6 988.5,817.1 989.6,823.0 990.7,818.8 992.0,824.5 993.1,824.5 994.0,815.8 995.4,821.3 996.4,824.5 997.7,821.6 998.9,824.5 999.8,818.2 1000.7,818.2 1001.6,824.5 1002.9,824.5 1004.3,815.5 1005.2,815.5 1006.0,817.4 1007.3,821.8 1008.5,824.5 1009.6,815.8 1010.5,824.5 1011.5,818.6 1012.3,824.5 1013.3,817.2 1014.5,816.5 1015.6,824.5 1016.8,819.7 1018.2,817.8 1019.6,824.5 1021.0,824.5 1022.1,821.7 1022.9,815.3 1024.1,822.1 1025.1,816.9 1026.1,820.4 1027.5,820.8 1028.3,816.1 1029.5,822.0 1030.9,824.5 1032.1,819.9 1033.3,820.4 1034.1,821.0 1035.2,824.5 1036.4,817.4 1037.5,824.5 1038.3,824.5 1039.5,824.5 1040.3,824.5 1041.3,817.6 1042.1,819.2 1043.1,815.2 1044.1,818.2 1045.3,821.9 1046.3,816.2 1047.5,819.7 1048.4,818.2 1049.3,824.5 1050.2,818.0 1051.5,821.8 1052.5,816.5 1053.8,824.5 1055.2,824.5 1056.6,824.5 1057.9,824.5 1059.3,821.3 1060.2,824.5 1061.4,824.5 1062.4,819.6 1063.6,813.9 1064.5,818.2 1065.9,815.1 1067.2,824.5 1068.6,821.2 1069.8,821.6 1070.8,815.4 1071.7,824.5 1072.5,816.0 1073.4,824.5 1074.4,824.5 1075.5,817.5 1076.8,817.4 1077.9,824.5 1079.2,824.5 1080.2,824.5 1081.3,821.1 1082.4,815.7 1083.7,821.0 1084.6,815.2 1085.9,818.9 1086.7,815.4 1088.0,818.9 1089.1,820.4 1089.9,821.1 1091.1,824.5 1092.4,824.5 1093.7,823.0 1094.9,817.1 1096.0,813.7 1097.2,821.8 1098.3,814.3 1099.6,824.5 1100.5,821.0 1101.5,815.8 1102.8,816.8 1103.7,817.7 1105.0,815.5 1105.9,821.5 1107.3,816.5 1108.4,818.3 1109.5,813.7 1110.8,824.5 1111.9,816.2 1112.9,824.5 1114.0,824.5 1114.9,816.3 1116.1,815.0 1116.9,820.1 1117.9,822.3 1119.0,815.2 1120.0,824.5 1121.0,814.0 1121.9,822.3 1122.9,813.4 1123.7,814.7 1124.7,823.3 1125.8,824.5 1127.0,823.4 1128.4,813.1 1129.8,824.5 1130.7,820.4 1131.9,823.0 1133.1,812.1 1134.2,817.2 1135.4,815.9 1136.7,816.0 1137.7,812.0 1138.9,811.9 1140.0,817.3 1141.3,815.2 1142.6,813.5 1143.6,815.7 1144.8,815.0 1146.2,814.6 1147.3,815.7 1148.7,812.9 1149.6,823.3 1150.8,816.0 1152.0,812.3 1153.2,818.9 1154.4,815.5 1155.3,813.6 1156.4,824.5 1157.4,812.1 1158.5,811.6 1159.8,809.9 1160.6,812.1 1161.5,811.2 1162.6,814.1 1163.7,820.3 1164.6,813.6 1165.8,811.3 1167.1,812.6 1168.0,807.8 1169.0,806.9 1169.9,811.9 1171.0,816.0 1171.9,805.5 1173.1,806.0 1174.4,807.9 1175.7,805.7 1176.7,804.8 1178.0,805.4 1179.0,824.5 1180.2,824.5 1181.5,806.4 1181.0,812.0 1183.0,805.0 1184.5,798.0 1185.5,788.0 1186.3,778.0 1187.0,777.0 1187.0,825.0" fill="#000"/><polyline points="396,823.6 444.9,823.6 651.5,691.2" fill="none" stroke="#dc1c22" stroke-width="2"/></svg>
<div class="abs" style="left:1068px;top:691.4px;width:118px;height:22.4px;border:1px solid #808080;border-radius:3px;background:rgba(200,200,200,.66);"></div>
<span class="abs" style="left:1081.20px;top:696.87px;font-size:11.5px;line-height:1;color:#555555;transform:scaleX(0.9532);transform-origin:0 0;">Reset Adjustments</span>
<div class="abs" style="left:398px;top:831.3px;width:786px;height:4px;border:1px solid #d4d2c4;border-bottom-color:#fbfbf7;border-radius:2px;background:#f4f3ea;"></div>
<div class="abs" style="left:744px;top:826px;width:94px;height:12px;background:#fcfcfe;"></div>
<span class="abs" style="left:746.10px;top:826.07px;font-size:11.5px;line-height:1;color:#000;transform:scaleX(0.9514);transform-origin:0 0;">Adjust Black Level</span>
<svg class="abs" style="left:444.2px;top:825px" width="11" height="17" viewBox="0 0 11 17"><rect x="0.5" y="0.5" width="10" height="16" rx="2" fill="#f3f3ef" stroke="#8e9a9e"/><rect x="1" y="1" width="9" height="2.2" rx="1" fill="#7fcf8a"/><rect x="1" y="13.6" width="9" height="2.4" rx="1" fill="#4fb85f"/></svg>
<div class="abs" style="left:0;top:842.5px;width:1193px;height:1.2px;background:#8f8d84;"></div>
<div class="abs" style="left:0;top:843.6px;width:1440px;height:22.4px;background:linear-gradient(#f3f1e7 0%,#eeebdd 25%,#ece9d8 60%,#e9e6d6 88%,#f4f3ec 100%);"></div>
<span class="abs" style="left:3.10px;top:849.99px;font-size:11px;line-height:1;color:#000;transform:scaleX(0.9797);transform-origin:0 0;">Previewing : 3298 frames</span>
<span class="abs" style="left:128.30px;top:849.99px;font-size:11px;line-height:1;color:#000;transform:scaleX(0.9810);transform-origin:0 0;">(1 dropped) in</span>
<span class="abs" style="left:200.10px;top:849.99px;font-size:11px;line-height:1;color:#000;transform:scaleX(1.0172);transform-origin:0 0;">0:29:13,03125 at 1,9 fps</span>
<span class="abs" style="left:327.50px;top:849.99px;font-size:11px;line-height:1;color:#000;transform:scaleX(1.0181);transform-origin:0 0;">(currently at 1,1 fps)</span>
<span class="abs" style="left:1242.50px;top:849.69px;font-size:11px;line-height:1;color:#000;transform:scaleX(0.9471);transform-origin:0 0;">Frame:</span>
<div class="abs" style="left:1281.8px;top:846.2px;width:100px;height:16.6px;border:1px solid #6b7a72;border-radius:3px;background:#fff;"></div>
<div class="abs" style="left:1286.1px;top:848.3px;width:6px;height:11.8px;background:linear-gradient(#8fe08f,#3dc43d 40%,#2fb82f 60%,#86dc86);"></div>
<div class="abs" style="left:1294.1px;top:848.3px;width:6px;height:11.8px;background:linear-gradient(#8fe08f,#3dc43d 40%,#2fb82f 60%,#86dc86);"></div>
<div class="abs" style="left:1302.1px;top:848.3px;width:6px;height:11.8px;background:linear-gradient(#8fe08f,#3dc43d 40%,#2fb82f 60%,#86dc86);"></div>
<div class="abs" style="left:1310.0px;top:848.3px;width:6px;height:11.8px;background:linear-gradient(#8fe08f,#3dc43d 40%,#2fb82f 60%,#86dc86);"></div>
<div class="abs" style="left:1318.0px;top:848.3px;width:6px;height:11.8px;background:linear-gradient(#8fe08f,#3dc43d 40%,#2fb82f 60%,#86dc86);"></div>
<div class="abs" style="left:1326.0px;top:848.3px;width:6px;height:11.8px;background:linear-gradient(#8fe08f,#3dc43d 40%,#2fb82f 60%,#86dc86);"></div>
<div class="abs" style="left:1334.0px;top:848.3px;width:6px;height:11.8px;background:linear-gradient(#8fe08f,#3dc43d 40%,#2fb82f 60%,#86dc86);"></div>
<div class="abs" style="left:1342.0px;top:848.3px;width:6px;height:11.8px;background:linear-gradient(#8fe08f,#3dc43d 40%,#2fb82f 60%,#86dc86);"></div>
<div class="abs" style="left:1349.9px;top:848.3px;width:6px;height:11.8px;background:linear-gradient(#8fe08f,#3dc43d 40%,#2fb82f 60%,#86dc86);"></div>
<div class="abs" style="left:1357.9px;top:848.3px;width:6px;height:11.8px;background:linear-gradient(#8fe08f,#3dc43d 40%,#2fb82f 60%,#86dc86);"></div>
<div class="abs" style="left:1365.9px;top:848.3px;width:6px;height:11.8px;background:linear-gradient(#8fe08f,#3dc43d 40%,#2fb82f 60%,#86dc86);"></div>
<div class="abs" style="left:1373.9px;top:848.3px;width:6px;height:11.8px;background:linear-gradient(#8fe08f,#3dc43d 40%,#2fb82f 60%,#86dc86);"></div>
<span class="abs" style="left:1385.80px;top:849.69px;font-size:11px;line-height:1;color:#000;transform:scaleX(1.0315);transform-origin:0 0;">0,9/0,1</span>
<div class="abs" style="left:0;top:866px;width:1440px;height:34px;background:linear-gradient(#3a82ec 0%,#3f8cf4 6%,#2f74e6 12%,#2663de 22%,#245edb 45%,#2460dc 75%,#2259d0 90%,#1d4fc0 100%);"></div>
<div class="abs" style="left:-8px;top:870px;width:143.5px;height:44px;border-radius:0 13px 22px 0 / 0 15px 30px 0;background:linear-gradient(#5aae5c 0%,#6dc070 4%,#4aa64d 10%,#3e9c41 22%,#3a983d 50%,#3c9a3f 65%,#2f8a33 100%);box-shadow:inset -3px 0 4px rgba(20,80,20,.6), inset 10px 0 2px -8px #174f17;"></div>
<svg class="abs" style="left:10.5px;top:875.5px" width="20.5" height="18" viewBox="-0.5 0 17.5 16.5"><path d="M2.2 2.2 Q5 0.6 8.2 2.6 L7 7.6 Q4 5.8 1 7.2 Z" fill="#e8602c"/><path d="M9.6 3.2 Q12.6 5.2 16 3.8 L14.8 8.8 Q11.6 10.2 8.4 8.2 Z" fill="#7cc243"/><path d="M0.8 8.6 Q3.8 7 6.8 9 L5.6 14 Q2.8 12.2 -0.4 13.6 Z" fill="#4a8be6"/><path d="M8 9.6 Q11.2 11.6 14.4 10.2 L13.2 15.2 Q10 16.6 6.8 14.6 Z" fill="#f2c332"/></svg>
<span class="abs" style="left:34.40px;top:875.81px;font-size:17px;line-height:1;color:#fff;font-weight:bold;font-style:italic;letter-spacing:0.435px;text-shadow:1px 1px 1px #2a5a22;">démarrer</span>
<div class="abs" style="left:146.5px;top:876.5px;width:2px;height:2px;background:#12329a;"></div>
<div class="abs" style="left:148.5px;top:880.5px;width:2px;height:2px;background:#12329a;"></div>
<div class="abs" style="left:146.5px;top:884.5px;width:2px;height:2px;background:#12329a;"></div>
<div class="abs" style="left:148.5px;top:888.5px;width:2px;height:2px;background:#12329a;"></div>
<div class="abs" style="left:146.5px;top:892.5px;width:2px;height:2px;background:#12329a;"></div>
<div class="abs" style="left:155.5px;top:873.7px;width:159px;height:23px;border-radius:3px;background:#1e52b7;box-shadow:inset 1px 1px 2px #143a8e, inset -1px -1px 1px #2b62cc;"></div>
<div class="abs" style="left:165.5px;top:877.5px;width:15.5px;height:15.5px;border-radius:50%;background:radial-gradient(circle at 45% 40%,#c9a58f 0%,#8b7a86 45%,#4a5a8c 80%,#2a3f7a 100%);"></div>
<div class="abs" style="left:164.5px;top:884px;width:17.5px;height:5px;border-radius:50%;background:rgba(150,180,170,.6);"></div>
<span class="abs" style="left:185.60px;top:880.49px;font-size:11px;line-height:1;color:#fff;transform:scaleX(0.9769);transform-origin:0 0;">SharpCap - ALTAIRG...</span>
<div class="abs" style="left:1263.5px;top:876.5px;width:2px;height:2px;background:#12329a;"></div>
<div class="abs" style="left:1265.5px;top:880.5px;width:2px;height:2px;background:#12329a;"></div>
<div class="abs" style="left:1263.5px;top:884.5px;width:2px;height:2px;background:#12329a;"></div>
<div class="abs" style="left:1265.5px;top:888.5px;width:2px;height:2px;background:#12329a;"></div>
<div class="abs" style="left:1263.5px;top:892.5px;width:2px;height:2px;background:#12329a;"></div>
<div class="abs" style="left:1275.5px;top:878px;width:16.5px;height:15px;background:#2f67d8;"></div>
<span class="abs" style="left:1276.80px;top:880.49px;font-size:11px;line-height:1;color:#fff;transform:scaleX(0.8247);transform-origin:0 0;">FR</span>
<div class="abs" style="left:1311.5px;top:869.5px;width:129px;height:30.5px;background:linear-gradient(#2f9cf6 0%,#1b94f0 8%,#128ee9 22%,#0f8bea 70%,#0e84e2 90%,#0c74d0 100%);box-shadow:inset 1px 0 0 #0a4fa8, inset 2px 0 1px #3fa8f8;"></div>
<svg class="abs" style="left:1302.5px;top:876px" width="19" height="19" viewBox="0 0 19 19"><circle cx="9.5" cy="9.5" r="8.8" fill="#2f7be8" stroke="#9cc6f8" stroke-width="1"/><circle cx="9" cy="8" r="6" fill="#4a95f2" opacity=".7"/><path d="M11.2 5.4 L7 9.5 L11.2 13.6" stroke="#fff" stroke-width="2.3" fill="none" stroke-linejoin="round"/></svg>
<svg class="abs" style="left:1322px;top:877px" width="15" height="15" viewBox="0 0 15 15"><path d="M2 3 Q4 0.5 7 2.5 Q10 0 12.8 1.5 Q12 5 14.5 7 Q12 9 13 13 Q9.5 12 7 14.5 Q5 11.5 1.2 12.5 Q3 9 0.5 7 Q3.4 5.6 2 3 Z" fill="#f58220"/><circle cx="7.3" cy="7" r="2.5" fill="#fbe6cc"/><circle cx="7.6" cy="7.2" r="1.2" fill="#f58220"/></svg>
<svg class="abs" style="left:1340px;top:877px" width="15" height="15"><rect x="0" y="11.0" width="2" height="3.5" fill="#e8eef6" stroke="#8aa8c8" stroke-width=".4"/><rect x="3" y="8.5" width="2" height="6" fill="#e8eef6" stroke="#8aa8c8" stroke-width=".4"/><rect x="6" y="6.0" width="2" height="8.5" fill="#e8eef6" stroke="#8aa8c8" stroke-width=".4"/><rect x="9" y="3.0" width="2" height="11.5" fill="#e8eef6" stroke="#8aa8c8" stroke-width=".4"/><rect x="12" y="0.0" width="2" height="14.5" fill="#e8eef6" stroke="#8aa8c8" stroke-width=".4"/></svg>
<svg class="abs" style="left:1358px;top:877px" width="16" height="15" viewBox="0 0 16 15"><path d="M13.5 3 Q9 -1 5.5 3 Q3.5 6.5 6 10 Q9.5 13.5 14 10.5 L12.5 8.2 Q10 10.2 8 8.4 Q6.4 6.2 8 4.4 Q10 2.8 12 4.8 Z" fill="#d8261c"/><path d="M0.5 10.5 L6.5 6.5 L8.2 9.2 L3 13.8 Q1 13 0.5 10.5 Z" fill="#e8dcc0"/><path d="M6 6.8 L8.6 5.2 L9.8 7.6 L7.6 9 Z" fill="#7a8cc8"/></svg>
<svg class="abs" style="left:1376px;top:877.5px" width="17" height="16" viewBox="0 0 17 16"><rect x="1" y="12" width="3" height="3" fill="#f4f4f0" stroke="#b8b8b0" stroke-width=".4"/><rect x="5" y="9.5" width="3" height="5.5" fill="#f4f4f0" stroke="#b8b8b0" stroke-width=".4"/><rect x="9" y="6.5" width="3" height="8.5" fill="#f4f4f0" stroke="#b8b8b0" stroke-width=".4"/><rect x="13" y="3.5" width="3" height="11.5" fill="#f4f4f0" stroke="#b8b8b0" stroke-width=".4"/><circle cx="5.6" cy="5.2" r="5" fill="#d81c1c"/><path d="M3.2 2.8 L8 7.6 M8 2.8 L3.2 7.6" stroke="#fff" stroke-width="1.7"/></svg>
<span class="abs" style="left:1398.80px;top:879.69px;font-size:11px;line-height:1;color:#fff;transform:scaleX(0.9662);transform-origin:0 0;">05:31</span>
</body></html>
